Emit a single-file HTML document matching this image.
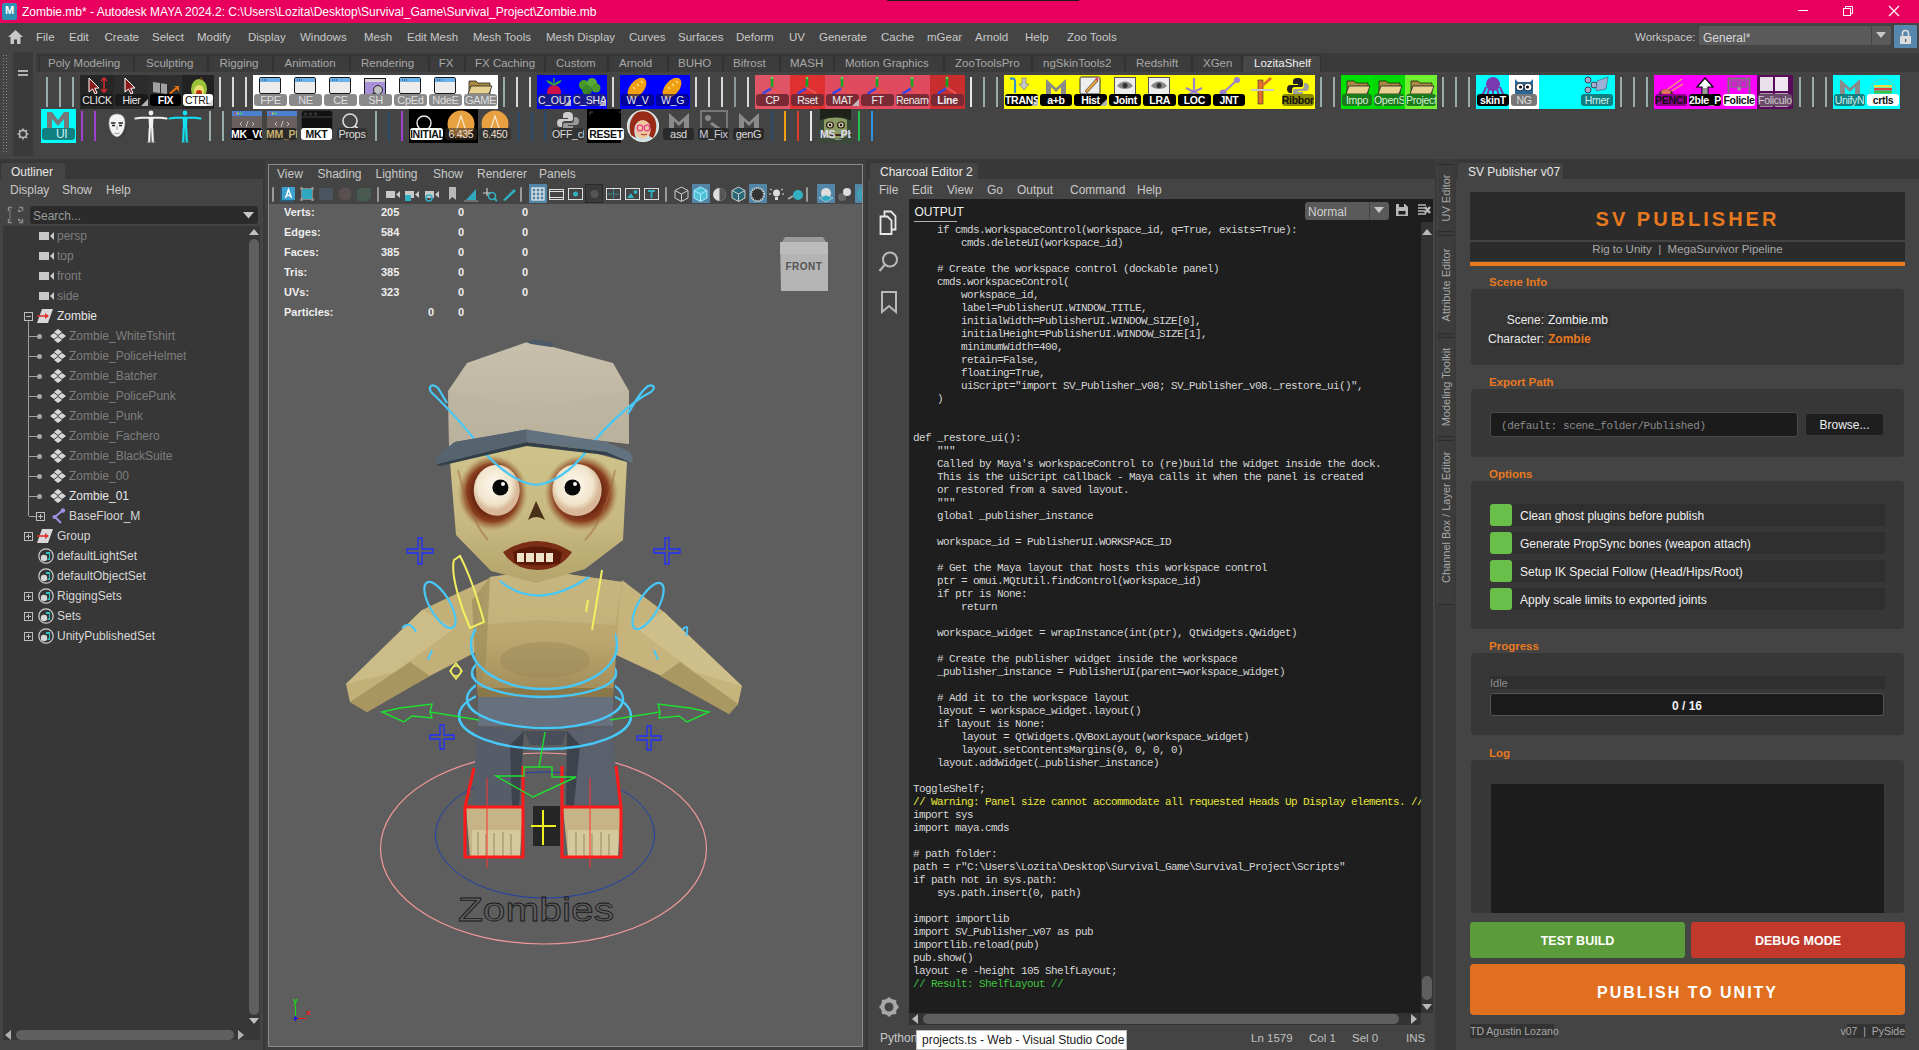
<!DOCTYPE html><html><head><meta charset="utf-8"><style>
html,body{margin:0;padding:0;width:1919px;height:1050px;overflow:hidden;background:#444;}
body{position:relative;font-family:"Liberation Sans",sans-serif;}
div{position:absolute;}
.t{white-space:pre;}
</style></head><body>
<div style="left:0px;top:0px;width:1919px;height:23px;background:#e9005e;"></div>
<div style="left:0px;top:22px;width:1919px;height:1px;background:#f10060;"></div>
<div style="left:887px;top:0px;width:192px;height:1px;background:#1a1a1a;"></div>
<div style="left:2px;top:3px;width:15px;height:17px;background:#2f8fb0;border-radius:2px"></div>
<div class="t" style="left:5px;top:5px;font-size:11px;line-height:11px;color:#fff;font-weight:bold">M</div>
<div class="t" style="left:22px;top:6px;font-size:12px;line-height:12px;color:#ffffff;">Zombie.mb* - Autodesk MAYA 2024.2: C:\Users\Lozita\Desktop\Survival_Game\Survival_Project\Zombie.mb</div>
<div style="left:1798px;top:10px;width:10px;height:1px;background:#fff;"></div>
<svg style="position:absolute;left:1842px;top:5px" width="12" height="12"><rect x="1.5" y="3.5" width="7" height="7" fill="none" stroke="#fff"/><path d="M3.5 3.5V1.5H10.5V8.5H8.5" fill="none" stroke="#fff"/></svg>
<svg style="position:absolute;left:1888px;top:5px" width="12" height="12"><path d="M1 1L11 11M11 1L1 11" stroke="#fff" stroke-width="1.2"/></svg>
<div style="left:0px;top:23px;width:1919px;height:29px;background:#444444;"></div>
<div style="left:0px;top:23px;width:1919px;height:1px;background:#3b4a43;"></div>
<svg style="position:absolute;left:7px;top:29px" width="17" height="16"><path d="M8.5 1L1 8H3.5V15H7V10.5H10V15H13.5V8H16Z" fill="#c8c8c8"/></svg>
<div class="t" style="left:36px;top:32px;font-size:11.5px;line-height:11.5px;color:#c8c8c8;">File</div>
<div class="t" style="left:69px;top:32px;font-size:11.5px;line-height:11.5px;color:#c8c8c8;">Edit</div>
<div class="t" style="left:104.5px;top:32px;font-size:11.5px;line-height:11.5px;color:#c8c8c8;">Create</div>
<div class="t" style="left:152px;top:32px;font-size:11.5px;line-height:11.5px;color:#c8c8c8;">Select</div>
<div class="t" style="left:197px;top:32px;font-size:11.5px;line-height:11.5px;color:#c8c8c8;">Modify</div>
<div class="t" style="left:248px;top:32px;font-size:11.5px;line-height:11.5px;color:#c8c8c8;">Display</div>
<div class="t" style="left:300px;top:32px;font-size:11.5px;line-height:11.5px;color:#c8c8c8;">Windows</div>
<div class="t" style="left:364px;top:32px;font-size:11.5px;line-height:11.5px;color:#c8c8c8;">Mesh</div>
<div class="t" style="left:407px;top:32px;font-size:11.5px;line-height:11.5px;color:#c8c8c8;">Edit Mesh</div>
<div class="t" style="left:473px;top:32px;font-size:11.5px;line-height:11.5px;color:#c8c8c8;">Mesh Tools</div>
<div class="t" style="left:546px;top:32px;font-size:11.5px;line-height:11.5px;color:#c8c8c8;">Mesh Display</div>
<div class="t" style="left:629px;top:32px;font-size:11.5px;line-height:11.5px;color:#c8c8c8;">Curves</div>
<div class="t" style="left:678px;top:32px;font-size:11.5px;line-height:11.5px;color:#c8c8c8;">Surfaces</div>
<div class="t" style="left:736px;top:32px;font-size:11.5px;line-height:11.5px;color:#c8c8c8;">Deform</div>
<div class="t" style="left:789px;top:32px;font-size:11.5px;line-height:11.5px;color:#c8c8c8;">UV</div>
<div class="t" style="left:819px;top:32px;font-size:11.5px;line-height:11.5px;color:#c8c8c8;">Generate</div>
<div class="t" style="left:881px;top:32px;font-size:11.5px;line-height:11.5px;color:#c8c8c8;">Cache</div>
<div class="t" style="left:927px;top:32px;font-size:11.5px;line-height:11.5px;color:#c8c8c8;">mGear</div>
<div class="t" style="left:975px;top:32px;font-size:11.5px;line-height:11.5px;color:#c8c8c8;">Arnold</div>
<div class="t" style="left:1025px;top:32px;font-size:11.5px;line-height:11.5px;color:#c8c8c8;">Help</div>
<div class="t" style="left:1067px;top:32px;font-size:11.5px;line-height:11.5px;color:#c8c8c8;">Zoo Tools</div>
<div class="t" style="left:1635px;top:32px;font-size:11.5px;line-height:11.5px;color:#c8c8c8;">Workspace:</div>
<div style="left:1699px;top:26px;width:192px;height:19px;background:#5a5a5a;border-radius:2px"></div>
<div style="left:1871px;top:26px;width:1px;height:19px;background:#444;"></div>
<div class="t" style="left:1703px;top:32px;font-size:12px;line-height:12px;color:#d8d8d8;">General*</div>
<svg style="position:absolute;left:1876px;top:32px" width="10" height="6"><path d="M0 0H10L5 6Z" fill="#c8c8c8"/></svg>
<div style="left:1894px;top:25px;width:23px;height:23px;background:#5787ad;border-radius:1px"></div>
<svg style="position:absolute;left:1899px;top:29px" width="13" height="16"><rect x="1" y="7" width="11" height="8" rx="1" fill="#ddd"/><path d="M3.5 7V4.5A3 3 0 0 1 9.5 4.5V7" fill="none" stroke="#ddd" stroke-width="1.6"/><rect x="6" y="10" width="1.2" height="3" fill="#555"/></svg>
<div style="left:0px;top:52px;width:1919px;height:107px;background:#444444;"></div>
<div style="left:2px;top:54px;width:5px;height:100px;background-image:radial-gradient(#8a8a8a 0.8px, transparent 0.9px);background-size:3px 3px"></div>
<div style="left:13px;top:52px;width:20px;height:104px;background:#3a3a3a;"></div>
<div style="left:18px;top:70px;width:10px;height:2px;background:#b0b0b0;"></div>
<div style="left:18px;top:74px;width:10px;height:2px;background:#b0b0b0;"></div>
<svg style="position:absolute;left:17px;top:128px" width="12" height="12"><circle cx="6" cy="6" r="3.6" fill="none" stroke="#b8b8b8" stroke-width="1.6"/><path d="M6 0.5V2.5M6 9.5V11.5M0.5 6H2.5M9.5 6H11.5M2.1 2.1L3.5 3.5M8.5 8.5L9.9 9.9M2.1 9.9L3.5 8.5M8.5 3.5L9.9 2.1" stroke="#b8b8b8" stroke-width="1.6"/></svg>
<div style="left:36px;top:53px;width:1883px;height:19px;background:#3a3a3a;"></div>
<div style="left:39px;top:55px;width:93px;height:16px;background:#3c3c3c;border:1px solid #323232;border-bottom:none;border-radius:3px 3px 0 0"></div>
<div class="t" style="left:48px;top:58px;font-size:11.5px;line-height:11.5px;color:#a8a8a8;">Poly Modeling</div>
<div style="left:134px;top:55px;width:72px;height:16px;background:#3c3c3c;border:1px solid #323232;border-bottom:none;border-radius:3px 3px 0 0"></div>
<div class="t" style="left:146px;top:58px;font-size:11.5px;line-height:11.5px;color:#a8a8a8;">Sculpting</div>
<div style="left:208px;top:55px;width:63px;height:16px;background:#3c3c3c;border:1px solid #323232;border-bottom:none;border-radius:3px 3px 0 0"></div>
<div class="t" style="left:219.5px;top:58px;font-size:11.5px;line-height:11.5px;color:#a8a8a8;">Rigging</div>
<div style="left:273px;top:55px;width:74.5px;height:16px;background:#3c3c3c;border:1px solid #323232;border-bottom:none;border-radius:3px 3px 0 0"></div>
<div class="t" style="left:284.5px;top:58px;font-size:11.5px;line-height:11.5px;color:#a8a8a8;">Animation</div>
<div style="left:349.5px;top:55px;width:77.5px;height:16px;background:#3c3c3c;border:1px solid #323232;border-bottom:none;border-radius:3px 3px 0 0"></div>
<div class="t" style="left:361px;top:58px;font-size:11.5px;line-height:11.5px;color:#a8a8a8;">Rendering</div>
<div style="left:429px;top:55px;width:33.5px;height:16px;background:#3c3c3c;border:1px solid #323232;border-bottom:none;border-radius:3px 3px 0 0"></div>
<div class="t" style="left:438.7px;top:58px;font-size:11.5px;line-height:11.5px;color:#a8a8a8;">FX</div>
<div style="left:464.5px;top:55px;width:78.5px;height:16px;background:#3c3c3c;border:1px solid #323232;border-bottom:none;border-radius:3px 3px 0 0"></div>
<div class="t" style="left:475px;top:58px;font-size:11.5px;line-height:11.5px;color:#a8a8a8;">FX Caching</div>
<div style="left:545px;top:55px;width:61px;height:16px;background:#3c3c3c;border:1px solid #323232;border-bottom:none;border-radius:3px 3px 0 0"></div>
<div class="t" style="left:556px;top:58px;font-size:11.5px;line-height:11.5px;color:#a8a8a8;">Custom</div>
<div style="left:608px;top:55px;width:58px;height:16px;background:#3c3c3c;border:1px solid #323232;border-bottom:none;border-radius:3px 3px 0 0"></div>
<div class="t" style="left:619px;top:58px;font-size:11.5px;line-height:11.5px;color:#a8a8a8;">Arnold</div>
<div style="left:668px;top:55px;width:52.5px;height:16px;background:#3c3c3c;border:1px solid #323232;border-bottom:none;border-radius:3px 3px 0 0"></div>
<div class="t" style="left:678px;top:58px;font-size:11.5px;line-height:11.5px;color:#a8a8a8;">BUHO</div>
<div style="left:722.5px;top:55px;width:55.5px;height:16px;background:#3c3c3c;border:1px solid #323232;border-bottom:none;border-radius:3px 3px 0 0"></div>
<div class="t" style="left:733px;top:58px;font-size:11.5px;line-height:11.5px;color:#a8a8a8;">Bifrost</div>
<div style="left:780px;top:55px;width:52px;height:16px;background:#3c3c3c;border:1px solid #323232;border-bottom:none;border-radius:3px 3px 0 0"></div>
<div class="t" style="left:790px;top:58px;font-size:11.5px;line-height:11.5px;color:#a8a8a8;">MASH</div>
<div style="left:834px;top:55px;width:108px;height:16px;background:#3c3c3c;border:1px solid #323232;border-bottom:none;border-radius:3px 3px 0 0"></div>
<div class="t" style="left:845px;top:58px;font-size:11.5px;line-height:11.5px;color:#a8a8a8;">Motion Graphics</div>
<div style="left:944px;top:55px;width:86px;height:16px;background:#3c3c3c;border:1px solid #323232;border-bottom:none;border-radius:3px 3px 0 0"></div>
<div class="t" style="left:955px;top:58px;font-size:11.5px;line-height:11.5px;color:#a8a8a8;">ZooToolsPro</div>
<div style="left:1032px;top:55px;width:91px;height:16px;background:#3c3c3c;border:1px solid #323232;border-bottom:none;border-radius:3px 3px 0 0"></div>
<div class="t" style="left:1043px;top:58px;font-size:11.5px;line-height:11.5px;color:#a8a8a8;">ngSkinTools2</div>
<div style="left:1125px;top:55px;width:65px;height:16px;background:#3c3c3c;border:1px solid #323232;border-bottom:none;border-radius:3px 3px 0 0"></div>
<div class="t" style="left:1136px;top:58px;font-size:11.5px;line-height:11.5px;color:#a8a8a8;">Redshift</div>
<div style="left:1192px;top:55px;width:48px;height:16px;background:#3c3c3c;border:1px solid #323232;border-bottom:none;border-radius:3px 3px 0 0"></div>
<div class="t" style="left:1203px;top:58px;font-size:11.5px;line-height:11.5px;color:#a8a8a8;">XGen</div>
<div style="left:1242px;top:55px;width:77px;height:16px;background:#474747;border:1px solid #323232;border-bottom:none;border-radius:3px 3px 0 0"></div>
<div class="t" style="left:1254px;top:58px;font-size:11.5px;line-height:11.5px;color:#f0f0f0;">LozitaShelf</div>
<div style="left:46px;top:77px;width:2px;height:30px;background:#9aabab"></div>
<div style="left:59px;top:77px;width:2px;height:30px;background:#9aabab"></div>
<div style="left:72px;top:77px;width:2px;height:30px;background:#9aabab"></div>
<div style="left:80px;top:75px;width:134px;height:34px;background:#262626"></div>
<svg style="position:absolute;left:80px;top:75px;" width="34" height="34" viewBox="0 0 34 34"><path d="M9 3L9 17L12.5 14L15 19L17 18L14.8 13.2L19 13Z" fill="#8b1a1a" stroke="#fff" stroke-width="1"/><path d="M24 3V17M21 6L24 3L27 6M21 14L24 17L27 14" stroke="#d02a2a" stroke-width="1.6" fill="none"/></svg>
<div class="t" style="left:81px;top:94px;width:32px;height:12px;background:#1a1a1a;border-radius:3px;color:#e8e8e8;font-size:10.5px;line-height:12px;text-align:center;overflow:hidden;letter-spacing:-0.3px;">CLICK</div>
<div style="left:114px;top:75px;width:35px;height:34px;background:#2c2c2c"></div>
<svg style="position:absolute;left:114px;top:75px;" width="34" height="34" viewBox="0 0 34 34"><path d="M11 3L11 17L14.5 14L17 19L19 18L16.8 13.2L21 13Z" fill="#8b1a1a" stroke="#fff" stroke-width="1"/></svg>
<div class="t" style="left:115px;top:94px;width:33px;height:12px;background:#1a1a1a;border-radius:3px;color:#e8e8e8;font-size:10.5px;line-height:12px;text-align:center;overflow:hidden;letter-spacing:-0.3px;">Hier</div>
<svg style="position:absolute;left:141px;top:99px;" width="7" height="7" viewBox="0 0 7 7"><path d="M7 0V7H0Z" fill="#d0d0d0" fill-opacity="0.85"/></svg>
<div style="left:149px;top:75px;width:33px;height:34px;background:#2f2f2f"></div>
<svg style="position:absolute;left:149px;top:75px;" width="34" height="34" viewBox="0 0 34 34"><path d="M4 7L11 8V18L4 17Z M12 8.2L18 9V19L12 18.2Z" fill="#a0a0a0"/><path d="M20 18L27 12L24 11H30V17L28 14L22 19Z" fill="#e07010"/></svg>
<div class="t" style="left:150px;top:94px;width:31px;height:12px;background:#000;border-radius:3px;color:#fff;font-size:10.5px;line-height:12px;text-align:center;overflow:hidden;letter-spacing:-0.3px;font-weight:bold;">FIX</div>
<div style="left:182px;top:75px;width:32px;height:34px;background:#222"></div>
<svg style="position:absolute;left:182px;top:75px;" width="34" height="34" viewBox="0 0 34 34"><ellipse cx="17" cy="14" rx="8" ry="10" fill="#9ac23a"/><ellipse cx="17" cy="16" rx="5" ry="6" fill="#e8e070"/><circle cx="17" cy="18" r="3" fill="#c03010"/><path d="M19 2L20 5" stroke="#7a4a20" stroke-width="1.2"/></svg>
<div class="t" style="left:183px;top:94px;width:30px;height:12px;background:#fff;border-radius:3px;color:#111;font-size:10.5px;line-height:12px;text-align:center;overflow:hidden;letter-spacing:-0.3px;">CTRL</div>
<svg style="position:absolute;left:206px;top:99px;" width="7" height="7" viewBox="0 0 7 7"><path d="M7 0V7H0Z" fill="#d0d0d0" fill-opacity="0.85"/></svg>
<div style="left:219px;top:77px;width:2px;height:30px;background:#d8d8d8"></div>
<div style="left:232px;top:77px;width:2px;height:30px;background:#d8d8d8"></div>
<div style="left:245px;top:77px;width:2px;height:30px;background:#d8d8d8"></div>
<div style="left:253px;top:75px;width:245px;height:34px;background:#fff"></div>
<svg style="position:absolute;left:253px;top:75px;" width="34" height="34" viewBox="0 0 34 34"><rect x="6.5" y="2.5" width="21" height="16" rx="1.5" fill="#ececec" stroke="#1a1a1a"/><rect x="7" y="3" width="20" height="4" fill="#6ab2ea"/><path d="M9 5h1M11 5h1M13 5h1" stroke="#234" stroke-width="1"/></svg>
<div class="t" style="left:254px;top:94px;width:33px;height:12px;background:#8a8a8a;border-radius:3px;color:#dedede;font-size:11px;line-height:12px;text-align:center;overflow:hidden;letter-spacing:-0.3px;">FPE</div>
<svg style="position:absolute;left:288px;top:75px;" width="34" height="34" viewBox="0 0 34 34"><rect x="6.5" y="2.5" width="21" height="16" rx="1.5" fill="#ececec" stroke="#1a1a1a"/><rect x="7" y="3" width="20" height="4" fill="#6ab2ea"/><path d="M9 5h1M11 5h1M13 5h1" stroke="#234" stroke-width="1"/></svg>
<div class="t" style="left:289px;top:94px;width:33px;height:12px;background:#8a8a8a;border-radius:3px;color:#dedede;font-size:11px;line-height:12px;text-align:center;overflow:hidden;letter-spacing:-0.3px;">NE</div>
<svg style="position:absolute;left:323px;top:75px;" width="34" height="34" viewBox="0 0 34 34"><rect x="6.5" y="2.5" width="21" height="16" rx="1.5" fill="#ececec" stroke="#1a1a1a"/><rect x="7" y="3" width="20" height="4" fill="#6ab2ea"/><path d="M9 5h1M11 5h1M13 5h1" stroke="#234" stroke-width="1"/></svg>
<div class="t" style="left:324px;top:94px;width:33px;height:12px;background:#8a8a8a;border-radius:3px;color:#dedede;font-size:11px;line-height:12px;text-align:center;overflow:hidden;letter-spacing:-0.3px;">CE</div>
<svg style="position:absolute;left:358px;top:75px;" width="34" height="34" viewBox="0 0 34 34"><rect x="6.5" y="3.5" width="21" height="22" fill="#a890d8" stroke="#1a1a1a"/><rect x="7" y="4" width="20" height="3" fill="#d8d8d8"/><circle cx="20" cy="15" r="4.5" fill="#c0c0c0" stroke="#222"/><path d="M16 18L12 23" stroke="#222" stroke-width="2"/></svg>
<div class="t" style="left:359px;top:94px;width:33px;height:12px;background:#8a8a8a;border-radius:3px;color:#dedede;font-size:11px;line-height:12px;text-align:center;overflow:hidden;letter-spacing:-0.3px;">SH</div>
<svg style="position:absolute;left:393px;top:75px;" width="34" height="34" viewBox="0 0 34 34"><rect x="6.5" y="2.5" width="21" height="16" rx="1.5" fill="#ececec" stroke="#1a1a1a"/><rect x="7" y="3" width="20" height="4" fill="#6ab2ea"/><path d="M9 5h1M11 5h1M13 5h1" stroke="#234" stroke-width="1"/></svg>
<div class="t" style="left:394px;top:94px;width:33px;height:12px;background:#8a8a8a;border-radius:3px;color:#dedede;font-size:11px;line-height:12px;text-align:center;overflow:hidden;letter-spacing:-0.3px;">CpEd</div>
<svg style="position:absolute;left:428px;top:75px;" width="34" height="34" viewBox="0 0 34 34"><rect x="6.5" y="2.5" width="21" height="16" rx="1.5" fill="#ececec" stroke="#1a1a1a"/><rect x="7" y="3" width="20" height="4" fill="#6ab2ea"/><path d="M9 5h1M11 5h1M13 5h1" stroke="#234" stroke-width="1"/></svg>
<div class="t" style="left:429px;top:94px;width:33px;height:12px;background:#8a8a8a;border-radius:3px;color:#dedede;font-size:11px;line-height:12px;text-align:center;overflow:hidden;letter-spacing:-0.3px;">NdeE</div>
<svg style="position:absolute;left:463px;top:75px;" width="34" height="34" viewBox="0 0 34 34"><path d="M6 6H13L15 8H27V19H6Z" fill="#a88a40" stroke="#222" stroke-width="0.8"/><path d="M8 11H29L26 19H5Z" fill="#e8d090" stroke="#222" stroke-width="0.8"/></svg>
<div class="t" style="left:464px;top:94px;width:33px;height:12px;background:#8a8a8a;border-radius:3px;color:#dedede;font-size:11px;line-height:12px;text-align:center;overflow:hidden;letter-spacing:-0.3px;">GAME</div>
<div style="left:503px;top:77px;width:2px;height:30px;background:#9aabab"></div>
<div style="left:516px;top:77px;width:2px;height:30px;background:#d8d8d8"></div>
<div style="left:529px;top:77px;width:2px;height:30px;background:#d8d8d8"></div>
<div style="left:537px;top:75px;width:70px;height:34px;background:#0000ff"></div>
<svg style="position:absolute;left:537px;top:75px;" width="34" height="34" viewBox="0 0 34 34"><circle cx="17" cy="17" r="7" fill="#d0104a"/><path d="M17 10C14 5 11 6 9 5C11 9 14 10 17 10C20 10 23 9 25 5C23 6 20 5 17 10Z" fill="#3aa03a"/><path d="M17 11V3" stroke="#3aa03a" stroke-width="1.5"/></svg>
<div class="t" style="left:538px;top:94px;width:33px;height:12px;background:#1a1a8a;border-radius:3px;color:#e8e8e8;font-size:10.5px;line-height:12px;text-align:center;overflow:hidden;letter-spacing:-0.3px;">C_OUT</div>
<svg style="position:absolute;left:564px;top:99px;" width="7" height="7" viewBox="0 0 7 7"><path d="M7 0V7H0Z" fill="#d0d0d0" fill-opacity="0.85"/></svg>
<svg style="position:absolute;left:572px;top:75px;" width="34" height="34" viewBox="0 0 34 34"><circle cx="12" cy="10" r="5" fill="#4a9a2a"/><circle cx="20" cy="8" r="5" fill="#5aaa3a"/><circle cx="24" cy="13" r="4.5" fill="#4a9a2a"/><circle cx="15" cy="15" r="5" fill="#3a8a2a"/><path d="M17 16V22" stroke="#3a7a1a" stroke-width="3"/></svg>
<div class="t" style="left:573px;top:94px;width:33px;height:12px;background:#1a1a8a;border-radius:3px;color:#e8e8e8;font-size:10.5px;line-height:12px;text-align:center;overflow:hidden;letter-spacing:-0.3px;">C_SHAF</div>
<svg style="position:absolute;left:599px;top:99px;" width="7" height="7" viewBox="0 0 7 7"><path d="M7 0V7H0Z" fill="#d0d0d0" fill-opacity="0.85"/></svg>
<div style="left:612px;top:77px;width:2px;height:30px;background:#d8d8d8"></div>
<div style="left:620px;top:75px;width:70px;height:34px;background:#0000ff"></div>
<svg style="position:absolute;left:620px;top:75px;" width="34" height="34" viewBox="0 0 34 34"><ellipse cx="17" cy="13" rx="7" ry="12" transform="rotate(40 17 13)" fill="#f0a010"/><path d="M13 12L15 14M17 9L19 11M21 6L23 8" stroke="#ffe090" stroke-width="1.2"/></svg>
<div class="t" style="left:621px;top:94px;width:33px;height:12px;background:rgba(0,0,90,0.6);border-radius:3px;color:#e8e8e8;font-size:10.5px;line-height:12px;text-align:center;overflow:hidden;letter-spacing:-0.3px;">W_V</div>
<svg style="position:absolute;left:655px;top:75px;" width="34" height="34" viewBox="0 0 34 34"><ellipse cx="17" cy="13" rx="7" ry="12" transform="rotate(40 17 13)" fill="#f0a010"/><path d="M13 12L15 14M17 9L19 11M21 6L23 8" stroke="#ffe090" stroke-width="1.2"/></svg>
<div class="t" style="left:656px;top:94px;width:33px;height:12px;background:rgba(0,0,90,0.6);border-radius:3px;color:#e8e8e8;font-size:10.5px;line-height:12px;text-align:center;overflow:hidden;letter-spacing:-0.3px;">W_G</div>
<div style="left:695px;top:77px;width:2px;height:30px;background:#d8d8d8"></div>
<div style="left:708px;top:77px;width:2px;height:30px;background:#d8d8d8"></div>
<div style="left:721px;top:77px;width:2px;height:30px;background:#d8d8d8"></div>
<div style="left:734px;top:77px;width:2px;height:30px;background:#8a9a9a"></div>
<div style="left:747px;top:77px;width:2px;height:30px;background:#d8d8d8"></div>
<div style="left:755px;top:75px;width:35px;height:34px;background:#e05565"></div>
<svg style="position:absolute;left:755px;top:75px;" width="34" height="34" viewBox="0 0 34 34"><path d="M17 13.5V3" stroke="#10a820" stroke-width="2.6"/><path d="M17 13L8.5 18" stroke="#3048e8" stroke-width="2.6" stroke-linecap="round"/><path d="M17 13L25.5 18" stroke="#e85050" stroke-width="2.6" stroke-linecap="round"/><circle cx="17" cy="3" r="1.3" fill="#50e060"/></svg>
<div class="t" style="left:756px;top:94px;width:33px;height:12px;background:#7a2a35;border-radius:3px;color:#eee;font-size:10.5px;line-height:12px;text-align:center;overflow:hidden;letter-spacing:-0.3px;">CP</div>
<div style="left:790px;top:75px;width:35px;height:34px;background:#e03030"></div>
<svg style="position:absolute;left:790px;top:75px;" width="34" height="34" viewBox="0 0 34 34"><path d="M17 13.5V3" stroke="#10a820" stroke-width="2.6"/><path d="M17 13L8.5 18" stroke="#3048e8" stroke-width="2.6" stroke-linecap="round"/><path d="M17 13L25.5 18" stroke="#e85050" stroke-width="2.6" stroke-linecap="round"/><circle cx="17" cy="3" r="1.3" fill="#50e060"/></svg>
<div class="t" style="left:791px;top:94px;width:33px;height:12px;background:#7a2a35;border-radius:3px;color:#eee;font-size:10.5px;line-height:12px;text-align:center;overflow:hidden;letter-spacing:-0.3px;">Rset</div>
<div style="left:825px;top:75px;width:35px;height:34px;background:#e04a5e"></div>
<svg style="position:absolute;left:825px;top:75px;" width="34" height="34" viewBox="0 0 34 34"><path d="M17 13.5V3" stroke="#10a820" stroke-width="2.6"/><path d="M17 13L8.5 18" stroke="#3048e8" stroke-width="2.6" stroke-linecap="round"/><path d="M17 13L25.5 18" stroke="#e85050" stroke-width="2.6" stroke-linecap="round"/><circle cx="17" cy="3" r="1.3" fill="#50e060"/></svg>
<div class="t" style="left:826px;top:94px;width:33px;height:12px;background:#7a2a35;border-radius:3px;color:#eee;font-size:10.5px;line-height:12px;text-align:center;overflow:hidden;letter-spacing:-0.3px;">MAT</div>
<svg style="position:absolute;left:852px;top:99px;" width="7" height="7" viewBox="0 0 7 7"><path d="M7 0V7H0Z" fill="#d0d0d0" fill-opacity="0.85"/></svg>
<div style="left:860px;top:75px;width:35px;height:34px;background:#e04a5e"></div>
<svg style="position:absolute;left:860px;top:75px;" width="34" height="34" viewBox="0 0 34 34"><path d="M17 13.5V3" stroke="#10a820" stroke-width="2.6"/><path d="M17 13L8.5 18" stroke="#3048e8" stroke-width="2.6" stroke-linecap="round"/><path d="M17 13L25.5 18" stroke="#e85050" stroke-width="2.6" stroke-linecap="round"/><circle cx="17" cy="3" r="1.3" fill="#50e060"/></svg>
<div class="t" style="left:861px;top:94px;width:33px;height:12px;background:#7a2a35;border-radius:3px;color:#eee;font-size:10.5px;line-height:12px;text-align:center;overflow:hidden;letter-spacing:-0.3px;">FT</div>
<div style="left:895px;top:75px;width:35px;height:34px;background:#e04a5e"></div>
<svg style="position:absolute;left:895px;top:75px;" width="34" height="34" viewBox="0 0 34 34"><path d="M17 13.5V3" stroke="#10a820" stroke-width="2.6"/><path d="M17 13L8.5 18" stroke="#3048e8" stroke-width="2.6" stroke-linecap="round"/><path d="M17 13L25.5 18" stroke="#e85050" stroke-width="2.6" stroke-linecap="round"/><circle cx="17" cy="3" r="1.3" fill="#50e060"/></svg>
<div class="t" style="left:896px;top:94px;width:33px;height:12px;background:#7a2a35;border-radius:3px;color:#eee;font-size:10.5px;line-height:12px;text-align:center;overflow:hidden;letter-spacing:-0.3px;">Rename</div>
<div style="left:930px;top:75px;width:35px;height:34px;background:#c82e2e"></div>
<svg style="position:absolute;left:930px;top:75px;" width="34" height="34" viewBox="0 0 34 34"><path d="M17 13.5V3" stroke="#10a820" stroke-width="2.6"/><path d="M17 13L8.5 18" stroke="#3048e8" stroke-width="2.6" stroke-linecap="round"/><path d="M17 13L25.5 18" stroke="#e85050" stroke-width="2.6" stroke-linecap="round"/><circle cx="17" cy="3" r="1.3" fill="#50e060"/></svg>
<div class="t" style="left:931px;top:94px;width:33px;height:12px;background:#7a2a35;border-radius:3px;color:#eee;font-size:10.5px;line-height:12px;text-align:center;overflow:hidden;letter-spacing:-0.3px;font-weight:bold;">Line</div>
<div style="left:970px;top:77px;width:2px;height:30px;background:#e8e8e8"></div>
<div style="left:983px;top:77px;width:2px;height:30px;background:#9aabab"></div>
<div style="left:996px;top:77px;width:2px;height:30px;background:#9aabab"></div>
<div style="left:1004px;top:75px;width:311px;height:34px;background:#ffff00"></div>
<svg style="position:absolute;left:1004.0px;top:75px;" width="34" height="34" viewBox="0 0 34 34"><path d="M6 4C10 2 12 5 11 10V18" stroke="#3090d0" stroke-width="2.2" fill="none"/><path d="M18 3H22V9H25L20 15L15 9H18Z" fill="#c8c8c8" stroke="#666" stroke-width="0.6"/></svg>
<div class="t" style="left:1005.0px;top:94px;width:32.6px;height:12px;background:#000;border-radius:3px;color:#fff;font-size:10.5px;line-height:12px;text-align:center;overflow:hidden;letter-spacing:-0.3px;font-weight:bold;">TRANS</div>
<svg style="position:absolute;left:1030.6px;top:99px;" width="7" height="7" viewBox="0 0 7 7"><path d="M7 0V7H0Z" fill="#d0d0d0" fill-opacity="0.85"/></svg>
<svg style="position:absolute;left:1038.6px;top:75px;" width="34" height="34" viewBox="0 0 34 34"><path d="M7 20V4L17 13L27 4V20H22V12L17 17L12 12V20Z" fill="#8a8a8a"/></svg>
<div class="t" style="left:1039.6px;top:94px;width:32.6px;height:12px;background:#000;border-radius:3px;color:#fff;font-size:10.5px;line-height:12px;text-align:center;overflow:hidden;letter-spacing:-0.3px;font-weight:bold;">a+b</div>
<svg style="position:absolute;left:1073.2px;top:75px;" width="34" height="34" viewBox="0 0 34 34"><rect x="7" y="2" width="20" height="17" rx="1.5" fill="#eee" stroke="#333"/><path d="M12 16L23 4L25 6L14 18Z" fill="#e0a040" stroke="#333" stroke-width="0.6"/><circle cx="24" cy="4" r="1.5" fill="#e04050"/></svg>
<div class="t" style="left:1074.2px;top:94px;width:32.6px;height:12px;background:#000;border-radius:3px;color:#fff;font-size:10.5px;line-height:12px;text-align:center;overflow:hidden;letter-spacing:-0.3px;font-weight:bold;">Hist</div>
<svg style="position:absolute;left:1099.8px;top:99px;" width="7" height="7" viewBox="0 0 7 7"><path d="M7 0V7H0Z" fill="#d0d0d0" fill-opacity="0.85"/></svg>
<svg style="position:absolute;left:1107.8px;top:75px;" width="34" height="34" viewBox="0 0 34 34"><rect x="6.5" y="2.5" width="21" height="17" fill="#eee" stroke="#555"/><path d="M9 11C13 5 21 5 25 11C21 15 13 15 9 11Z" fill="#888"/><circle cx="17" cy="10.5" r="2.5" fill="#333"/></svg>
<div class="t" style="left:1108.8px;top:94px;width:32.6px;height:12px;background:#000;border-radius:3px;color:#fff;font-size:10.5px;line-height:12px;text-align:center;overflow:hidden;letter-spacing:-0.3px;font-weight:bold;">Joint</div>
<svg style="position:absolute;left:1142.4px;top:75px;" width="34" height="34" viewBox="0 0 34 34"><rect x="6.5" y="2.5" width="21" height="17" fill="#eee" stroke="#555"/><path d="M9 11C13 5 21 5 25 11C21 15 13 15 9 11Z" fill="#888"/><circle cx="17" cy="10.5" r="2.5" fill="#333"/></svg>
<div class="t" style="left:1143.4px;top:94px;width:32.6px;height:12px;background:#000;border-radius:3px;color:#fff;font-size:10.5px;line-height:12px;text-align:center;overflow:hidden;letter-spacing:-0.3px;font-weight:bold;">LRA</div>
<svg style="position:absolute;left:1177.0px;top:75px;" width="34" height="34" viewBox="0 0 34 34"><path d="M17 3V17M17 17L9 13M17 17L25 13M17 17L11 20M17 17L23 20" stroke="#9a80d0" stroke-width="2.2"/></svg>
<div class="t" style="left:1178.0px;top:94px;width:32.6px;height:12px;background:#000;border-radius:3px;color:#fff;font-size:10.5px;line-height:12px;text-align:center;overflow:hidden;letter-spacing:-0.3px;font-weight:bold;">LOC</div>
<svg style="position:absolute;left:1211.6px;top:75px;" width="34" height="34" viewBox="0 0 34 34"><circle cx="25" cy="5" r="3" fill="#9a80d0"/><path d="M24 6L12 17" stroke="#9a80d0" stroke-width="2"/><circle cx="11" cy="18" r="3.5" fill="#9a80d0"/></svg>
<div class="t" style="left:1212.6px;top:94px;width:32.6px;height:12px;background:#000;border-radius:3px;color:#fff;font-size:10.5px;line-height:12px;text-align:center;overflow:hidden;letter-spacing:-0.3px;font-weight:bold;">JNT</div>
<svg style="position:absolute;left:1246.2px;top:75px;" width="34" height="34" viewBox="0 0 34 34"><rect x="12" y="5" width="5" height="24" fill="#e07030" stroke="#333" stroke-width="0.6"/><rect x="5" y="14" width="23" height="2" fill="#c8c8c8"/><path d="M16 11L25 3" stroke="#e07030" stroke-width="3"/></svg>
<svg style="position:absolute;left:1280.8px;top:75px;" width="34" height="34" viewBox="0 0 34 34"><path d="M17 3C12 3 12 5 12 7V9H17V10H9C7 10 6 12 6 14C6 17 8 18 9 18H11V15C11 13 12 12 14 12H20C22 12 22 11 22 9V7C22 5 21 3 17 3Z" fill="#222"/><path d="M17 23C22 23 22 21 22 19V17H17V16H25C27 16 28 14 28 12C28 9 26 8 25 8H23V11C23 13 22 14 20 14H14C12 14 12 15 12 17V19C12 21 13 23 17 23Z" fill="#a0a0a0"/></svg>
<div class="t" style="left:1281.8px;top:94px;width:32.6px;height:12px;background:#8a8a00;border-radius:3px;color:#111;font-size:10.5px;line-height:12px;text-align:center;overflow:hidden;letter-spacing:-0.3px;font-weight:bold;">Ribbon</div>
<div style="left:1320px;top:77px;width:2px;height:30px;background:#9aabab"></div>
<div style="left:1333px;top:77px;width:2px;height:30px;background:#9aabab"></div>
<div style="left:1341px;top:75px;width:32px;height:34px;background:#00e000"></div>
<svg style="position:absolute;left:1341px;top:75px;" width="34" height="34" viewBox="0 0 34 34"><path d="M6 6H13L15 8H27V19H6Z" fill="#a88a40" stroke="#222" stroke-width="0.8"/><path d="M8 11H29L26 19H5Z" fill="#e8d090" stroke="#222" stroke-width="0.8"/></svg>
<div class="t" style="left:1342px;top:94px;width:30px;height:12px;background:#1a7a1a;border-radius:3px;color:#d8f0d8;font-size:10.5px;line-height:12px;text-align:center;overflow:hidden;letter-spacing:-0.3px;">Impo</div>
<div style="left:1373px;top:75px;width:32px;height:34px;background:#00d800"></div>
<svg style="position:absolute;left:1373px;top:75px;" width="34" height="34" viewBox="0 0 34 34"><path d="M6 6H13L15 8H27V19H6Z" fill="#a88a40" stroke="#222" stroke-width="0.8"/><path d="M8 11H29L26 19H5Z" fill="#e8d090" stroke="#222" stroke-width="0.8"/></svg>
<div class="t" style="left:1374px;top:94px;width:30px;height:12px;background:#1a7a1a;border-radius:3px;color:#d8f0d8;font-size:10.5px;line-height:12px;text-align:center;overflow:hidden;letter-spacing:-0.3px;">OpenS</div>
<div style="left:1405px;top:75px;width:32px;height:34px;background:#70f030"></div>
<svg style="position:absolute;left:1405px;top:75px;" width="34" height="34" viewBox="0 0 34 34"><path d="M6 6H13L15 8H27V19H6Z" fill="#a88a40" stroke="#222" stroke-width="0.8"/><path d="M8 11H29L26 19H5Z" fill="#e8d090" stroke="#222" stroke-width="0.8"/></svg>
<div class="t" style="left:1406px;top:94px;width:30px;height:12px;background:#1a7a1a;border-radius:3px;color:#d8f0d8;font-size:10.5px;line-height:12px;text-align:center;overflow:hidden;letter-spacing:-0.3px;">Project</div>
<div style="left:1442px;top:77px;width:2px;height:30px;background:#9aabab"></div>
<div style="left:1455px;top:77px;width:2px;height:30px;background:#9aabab"></div>
<div style="left:1468px;top:77px;width:2px;height:30px;background:#9aabab"></div>
<div style="left:1476px;top:75px;width:139px;height:34px;background:#00ffff"></div>
<svg style="position:absolute;left:1476px;top:75px;" width="34" height="34" viewBox="0 0 34 34"><ellipse cx="17" cy="9" rx="7" ry="7" fill="#7a3ab0"/><path d="M10 12C8 18 6 20 5 20M13 14L11 21M17 15V21M21 14L23 21M24 12C26 18 28 20 29 20" stroke="#7a3ab0" stroke-width="2.2" fill="none"/></svg>
<div class="t" style="left:1477px;top:94px;width:32px;height:12px;background:#000;border-radius:3px;color:#fff;font-size:10.5px;line-height:12px;text-align:center;overflow:hidden;letter-spacing:-0.3px;font-weight:bold;">skinT</div>
<svg style="position:absolute;left:1507px;top:75px;" width="34" height="34" viewBox="0 0 34 34"><rect x="2" y="0" width="30" height="34" fill="#fff"/><path d="M8 4L11 7H23L26 4V20C26 24 22 26 17 26C12 26 8 24 8 20Z" fill="#2a6a9a"/><circle cx="13" cy="12" r="4" fill="#fff" stroke="#234"/><circle cx="21" cy="12" r="4" fill="#fff" stroke="#234"/><circle cx="13.5" cy="12" r="1.6" fill="#111"/><circle cx="20.5" cy="12" r="1.6" fill="#111"/></svg>
<div class="t" style="left:1511px;top:94px;width:26px;height:12px;background:#777;border-radius:3px;color:#ddd;font-size:10.5px;line-height:12px;text-align:center;overflow:hidden;letter-spacing:-0.3px;">NG</div>
<svg style="position:absolute;left:1580px;top:75px;" width="34" height="34" viewBox="0 0 34 34"><circle cx="8" cy="5" r="3" fill="#aac" stroke="#345"/><circle cx="8" cy="15" r="3" fill="#aac" stroke="#345"/><circle cx="14" cy="10" r="3" fill="#aac" stroke="#345"/><path d="M17 6L28 2L26 14L16 16Z" fill="#9ab0d8" stroke="#456" stroke-width="0.6"/></svg>
<div class="t" style="left:1581px;top:94px;width:32px;height:12px;background:#108080;border-radius:3px;color:#d0f0f0;font-size:10.5px;line-height:12px;text-align:center;overflow:hidden;letter-spacing:-0.3px;">Hmer</div>
<div style="left:1620px;top:77px;width:2px;height:30px;background:#9aabab"></div>
<div style="left:1633px;top:77px;width:2px;height:30px;background:#9aabab"></div>
<div style="left:1646px;top:77px;width:2px;height:30px;background:#9aabab"></div>
<div style="left:1654px;top:75px;width:139px;height:34px;background:#ff00ff"></div>
<svg style="position:absolute;left:1654px;top:75px;" width="34" height="34" viewBox="0 0 34 34"><path d="M14 14L28 4M16 17L29 9" stroke="#f0a070" stroke-width="1.3"/><ellipse cx="12" cy="19" rx="7" ry="5" fill="#3a2a2a"/><ellipse cx="12" cy="17" rx="5" ry="3" fill="#e07060"/></svg>
<div class="t" style="left:1655px;top:94px;width:32px;height:12px;background:#8a008a;border-radius:3px;color:#111;font-size:10.5px;line-height:12px;text-align:center;overflow:hidden;letter-spacing:-0.3px;font-weight:bold;">PENCIL</div>
<svg style="position:absolute;left:1688px;top:75px;" width="34" height="34" viewBox="0 0 34 34"><path d="M17 3L25 12H20V20H14V12H9Z" fill="#fff" stroke="#000" stroke-width="1.2"/><path d="M16 13V20M18 13V20" stroke="#000" stroke-width="0.8"/></svg>
<div class="t" style="left:1689px;top:94px;width:32px;height:12px;background:#000;border-radius:3px;color:#fff;font-size:10.5px;line-height:12px;text-align:center;overflow:hidden;letter-spacing:-0.3px;font-weight:bold;">2ble_P</div>
<svg style="position:absolute;left:1722px;top:75px;" width="34" height="34" viewBox="0 0 34 34"><rect x="6.5" y="3.5" width="21" height="18" fill="none" stroke="#777" stroke-width="2"/><rect x="9" y="6" width="7" height="6" fill="#d020d0" stroke="#777"/><rect x="18" y="6" width="7" height="6" fill="#d020d0" stroke="#777"/><circle cx="17" cy="14" r="2" fill="#999"/></svg>
<div class="t" style="left:1723px;top:94px;width:32px;height:12px;background:#fff;border-radius:3px;color:#111;font-size:10.5px;line-height:12px;text-align:center;overflow:hidden;letter-spacing:-0.3px;font-weight:bold;">Folicle</div>
<div style="left:1757px;top:75px;width:36px;height:34px;background:#5a0a5a"></div>
<svg style="position:absolute;left:1757px;top:75px;" width="34" height="34" viewBox="0 0 34 34"><rect x="3" y="2" width="13" height="14" fill="#e8e0e8"/><rect x="18" y="2" width="13" height="14" fill="#f0e8f0"/><rect x="3" y="18" width="13" height="14" fill="#a090a0"/><rect x="18" y="18" width="13" height="14" fill="#b0a0b0"/></svg>
<div class="t" style="left:1758px;top:94px;width:34px;height:12px;background:#6a4a6a;border-radius:3px;color:#ccc;font-size:10.5px;line-height:12px;text-align:center;overflow:hidden;letter-spacing:-0.3px;">Foliculo</div>
<div style="left:1799px;top:77px;width:2px;height:30px;background:#9aabab"></div>
<div style="left:1812px;top:77px;width:2px;height:30px;background:#9aabab"></div>
<div style="left:1825px;top:77px;width:2px;height:30px;background:#9aabab"></div>
<div style="left:1833px;top:75px;width:67px;height:34px;background:#00ffff"></div>
<svg style="position:absolute;left:1833px;top:75px;" width="34" height="34" viewBox="0 0 34 34"><path d="M7 20V4L17 13L27 4V20H22V12L17 17L12 12V20Z" fill="#8a8a8a"/></svg>
<div class="t" style="left:1834px;top:94px;width:31px;height:12px;background:#108080;border-radius:3px;color:#d0f0f0;font-size:10.5px;line-height:12px;text-align:center;overflow:hidden;letter-spacing:-0.3px;">UnifyN</div>
<svg style="position:absolute;left:1866px;top:75px;" width="34" height="34" viewBox="0 0 34 34"><circle cx="17" cy="17" r="13" fill="none" stroke="#40e0d0" stroke-width="1.6"/><rect x="8" y="10" width="18" height="2.5" fill="#f0e040"/><rect x="8" y="13" width="18" height="2.5" fill="#e04040"/><rect x="8" y="16" width="18" height="2.5" fill="#40c040"/></svg>
<div class="t" style="left:1867px;top:94px;width:32px;height:12px;background:#fff;border-radius:3px;color:#111;font-size:10.5px;line-height:12px;text-align:center;overflow:hidden;letter-spacing:-0.3px;font-weight:bold;">crtls</div>
<div style="left:41px;top:109px;width:35px;height:34px;background:#00ffff"></div>
<svg style="position:absolute;left:41px;top:109px;" width="34" height="34" viewBox="0 0 34 34"><path d="M6 19V3H11L17 11L23 3H28V19H23V10L17 17L11 10V19Z" fill="#777"/></svg>
<div class="t" style="left:42px;top:128px;width:33px;height:12px;background:#108080;border-radius:3px;color:#d0f0f0;font-size:12px;line-height:12px;text-align:center;overflow:hidden;letter-spacing:-0.3px;">_UI</div>
<div style="left:81px;top:111px;width:2px;height:30px;background:#a040d0"></div>
<div style="left:94px;top:111px;width:2px;height:30px;background:#a040d0"></div>
<svg style="position:absolute;left:100px;top:109px;" width="34" height="34" viewBox="0 0 34 34"><ellipse cx="18.5" cy="17.5" rx="8" ry="11" fill="#222" opacity="0.35"/><path d="M17 5C11 5 9 9 9 14C9 20 12 27 17 28C22 27 25 20 25 14C25 9 23 5 17 5Z" fill="#f2f2f2" stroke="#9a9a9a" stroke-width="0.6"/><path d="M11 14H15.5M18.5 14H23" stroke="#555" stroke-width="1.8"/><path d="M12 16.5h3M19 16.5h3" stroke="#222" stroke-width="1.4"/><path d="M17 17V21M14.5 24Q17 25.5 19.5 24" stroke="#999" stroke-width="1" fill="none"/></svg>
<svg style="position:absolute;left:134px;top:109px;" width="34" height="34" viewBox="0 0 34 34"><circle cx="17" cy="4" r="2.4" fill="#f0f0f0"/><path d="M1.5 9.5L7 8.8H27L32.5 9.5" stroke="#f0f0f0" stroke-width="2" fill="none" stroke-linecap="round"/><path d="M14.5 8H19.5L19 19H15Z" fill="#f0f0f0"/><path d="M15.8 19L15.2 32.5M18.2 19L18.8 32.5" stroke="#f0f0f0" stroke-width="2.2"/><path d="M13.5 33H16.5M17.5 33H20.5" stroke="#f0f0f0" stroke-width="1.2"/></svg>
<svg style="position:absolute;left:168px;top:109px;" width="34" height="34" viewBox="0 0 34 34"><circle cx="17" cy="4" r="2.4" fill="#10e0f0"/><path d="M1.5 9.5L7 8.8H27L32.5 9.5" stroke="#10e0f0" stroke-width="2" fill="none" stroke-linecap="round"/><path d="M14.5 8H19.5L19 19H15Z" fill="#10e0f0"/><path d="M15.8 19L15.2 32.5M18.2 19L18.8 32.5" stroke="#10e0f0" stroke-width="2.2"/><path d="M13.5 33H16.5M17.5 33H20.5" stroke="#10e0f0" stroke-width="1.2"/></svg>
<div style="left:209px;top:111px;width:2px;height:30px;background:#9aabab"></div>
<div style="left:222px;top:111px;width:2px;height:30px;background:#9aabab"></div>
<svg style="position:absolute;left:230px;top:109px;" width="34" height="34" viewBox="0 0 34 34"><rect x="2" y="2" width="30" height="20" rx="1.5" fill="#6a6060"/><rect x="2" y="2" width="30" height="5" fill="#4a80d0"/><circle cx="5" cy="4.5" r="0.9" fill="#e04040"/><circle cx="8" cy="4.5" r="0.9" fill="#e0e040"/><circle cx="11" cy="4.5" r="0.9" fill="#40e040"/><path d="M12 13L10 15L12 17M22 13L24 15L22 17M18 12L16 18" stroke="#ccc" stroke-width="0.9" fill="none"/></svg>
<div class="t" style="left:231px;top:128px;width:31px;height:12px;background:#000;border-radius:3px;color:#fff;font-size:10.5px;line-height:12px;text-align:center;overflow:hidden;letter-spacing:-0.3px;font-weight:bold;">MK_V0</div>
<svg style="position:absolute;left:265px;top:109px;" width="34" height="34" viewBox="0 0 34 34"><rect x="2" y="2" width="30" height="20" rx="1.5" fill="#6a6060"/><rect x="2" y="2" width="30" height="5" fill="#4a80d0"/><circle cx="5" cy="4.5" r="0.9" fill="#e04040"/><circle cx="8" cy="4.5" r="0.9" fill="#e0e040"/><circle cx="11" cy="4.5" r="0.9" fill="#40e040"/><path d="M12 13L10 15L12 17M22 13L24 15L22 17M18 12L16 18" stroke="#ccc" stroke-width="0.9" fill="none"/></svg>
<div class="t" style="left:266px;top:128px;width:31px;height:12px;background:#2a2a2a;border-radius:3px;color:#c8b070;font-size:10.5px;line-height:12px;text-align:center;overflow:hidden;letter-spacing:-0.3px;font-weight:bold;">MM_PE</div>
<svg style="position:absolute;left:300px;top:109px;" width="34" height="34" viewBox="0 0 34 34"><rect x="1.5" y="1.5" width="31" height="22" rx="3" fill="#111" stroke="#333"/><circle cx="5.5" cy="5" r="1.8" fill="#333"/><circle cx="10.5" cy="5" r="1.8" fill="#333"/><circle cx="15.5" cy="5" r="1.8" fill="#333"/><path d="M2 8H32" stroke="#444"/></svg>
<div class="t" style="left:301px;top:128px;width:31px;height:12px;background:#fff;border-radius:3px;color:#111;font-size:10.5px;line-height:12px;text-align:center;overflow:hidden;letter-spacing:-0.3px;font-weight:bold;">MKT</div>
<svg style="position:absolute;left:336px;top:109px;" width="34" height="34" viewBox="0 0 34 34"><circle cx="14" cy="12" r="7" fill="none" stroke="#ddd" stroke-width="1.6"/><path d="M19 17L25 23" stroke="#ddd" stroke-width="2"/></svg>
<div class="t" style="left:337px;top:128px;width:30px;height:12px;background:#333;border-radius:3px;color:#ddd;font-size:11px;line-height:12px;text-align:center;overflow:hidden;letter-spacing:-0.3px;">Props</div>
<div style="left:375px;top:111px;width:2px;height:30px;background:#9aabab"></div>
<div style="left:388px;top:111px;width:2px;height:30px;background:#2a4a6a"></div>
<div style="left:401px;top:111px;width:2px;height:30px;background:#a040d0"></div>
<div style="left:409px;top:109px;width:69px;height:34px;background:#000"></div>
<svg style="position:absolute;left:409px;top:109px;" width="34" height="34" viewBox="0 0 34 34"><circle cx="15" cy="14" r="7" fill="none" stroke="#eee" stroke-width="1.4"/></svg>
<div class="t" style="left:410px;top:128px;width:33px;height:12px;background:#fff;border-radius:3px;color:#111;font-size:10.5px;line-height:12px;text-align:center;overflow:hidden;letter-spacing:-0.3px;font-weight:bold;">INITIAL</div>
<svg style="position:absolute;left:444px;top:109px;" width="34" height="34" viewBox="0 0 34 34"><circle cx="17" cy="15" r="13.5" fill="#e8a040"/><path d="M12 22L17 7L22 22" stroke="#f8e8d0" stroke-width="1.2" fill="none"/></svg>
<div class="t" style="left:445px;top:128px;width:32px;height:12px;background:rgba(60,50,40,0.55);border-radius:3px;color:#f0e0d0;font-size:10.5px;line-height:12px;text-align:center;overflow:hidden;letter-spacing:-0.3px;">6.435</div>
<svg style="position:absolute;left:478px;top:109px;" width="34" height="34" viewBox="0 0 34 34"><circle cx="17" cy="15" r="13.5" fill="#e8a040"/><path d="M12 22L17 7L22 22" stroke="#f8e8d0" stroke-width="1.2" fill="none"/></svg>
<div class="t" style="left:479px;top:128px;width:32px;height:12px;background:#333;border-radius:3px;color:#f0e0d0;font-size:10.5px;line-height:12px;text-align:center;overflow:hidden;letter-spacing:-0.3px;">6.450</div>
<div style="left:518px;top:111px;width:2px;height:30px;background:#2a4a6a"></div>
<div style="left:531px;top:111px;width:2px;height:30px;background:#2a4a6a"></div>
<div style="left:544px;top:111px;width:2px;height:30px;background:#2a4a6a"></div>
<svg style="position:absolute;left:551px;top:109px;" width="34" height="34" viewBox="0 0 34 34"><path d="M17 3C12 3 12 5 12 7V9H17V10H9C7 10 6 12 6 14C6 17 8 18 9 18H11V15C11 13 12 12 14 12H20C22 12 22 11 22 9V7C22 5 21 3 17 3Z" fill="#ccc"/><path d="M17 23C22 23 22 21 22 19V17H17V16H25C27 16 28 14 28 12C28 9 26 8 25 8H23V11C23 13 22 14 20 14H14C12 14 12 15 12 17V19C12 21 13 23 17 23Z" fill="#999"/></svg>
<div class="t" style="left:552px;top:128px;width:32px;height:12px;background:#333;border-radius:3px;color:#ddd;font-size:10.5px;line-height:12px;text-align:center;overflow:hidden;letter-spacing:-0.3px;">OFF_cR</div>
<svg style="position:absolute;left:587px;top:109px;" width="34" height="34" viewBox="0 0 34 34"><rect x="0" y="0" width="38" height="34" fill="#000"/><path d="M3 6V3H6M32 3H35V6" stroke="#666" stroke-width="0.8" fill="none"/></svg>
<div class="t" style="left:588px;top:128px;width:36px;height:12px;background:#fff;border-radius:3px;color:#111;font-size:10.5px;line-height:12px;text-align:center;overflow:hidden;letter-spacing:-0.3px;font-weight:bold;">RESET</div>
<svg style="position:absolute;left:627px;top:109px;" width="34" height="34" viewBox="0 0 34 34"><circle cx="16" cy="17" r="16" fill="#c8e0e8"/><circle cx="16" cy="17" r="15.5" fill="none" stroke="#e8e8e0" stroke-width="1"/><path d="M4 26C1 18 3 7 11 3C19 0 28 5 29 14C30 20 28 26 26 29L22 27C24 22 24 16 20 13C15 10 10 12 8 17C7 21 7 25 9 29Z" fill="#9a2a18"/><path d="M9 17C10 12 14 10 19 12C23 14 24 19 23 24C21 29 16 31 12 29C9 27 8 22 9 17Z" fill="#f0c8a0"/><circle cx="13" cy="19" r="2.8" fill="none" stroke="#e83a8a" stroke-width="1.2"/><circle cx="20" cy="19" r="2.8" fill="none" stroke="#e83a8a" stroke-width="1.2"/><path d="M14 25Q17 27 20 25" stroke="#a03030" fill="none" stroke-width="1"/></svg>
<svg style="position:absolute;left:662px;top:109px;" width="34" height="34" viewBox="0 0 34 34"><path d="M7 20V4L17 13L27 4V20H22V12L17 17L12 12V20Z" fill="#8a8a8a"/></svg>
<div class="t" style="left:663px;top:128px;width:31px;height:12px;background:#2a2a2a;border-radius:3px;color:#ddd;font-size:11px;line-height:12px;text-align:center;overflow:hidden;letter-spacing:-0.3px;">asd</div>
<svg style="position:absolute;left:697px;top:109px;" width="34" height="34" viewBox="0 0 34 34"><rect x="4" y="2" width="26" height="21" fill="none" stroke="#777" stroke-width="2"/><circle cx="11" cy="9" r="3" fill="#888"/><path d="M14 14L25 22" stroke="#888" stroke-width="3"/></svg>
<div class="t" style="left:698px;top:128px;width:31px;height:12px;background:#2a2a2a;border-radius:3px;color:#ccd;font-size:11px;line-height:12px;text-align:center;overflow:hidden;letter-spacing:-0.3px;">M_Fix</div>
<svg style="position:absolute;left:732px;top:109px;" width="34" height="34" viewBox="0 0 34 34"><path d="M7 20V4L17 13L27 4V20H22V12L17 17L12 12V20Z" fill="#8a8a8a"/></svg>
<div class="t" style="left:733px;top:128px;width:31px;height:12px;background:#2a2a2a;border-radius:3px;color:#ddd;font-size:11px;line-height:12px;text-align:center;overflow:hidden;letter-spacing:-0.3px;">genG</div>
<div style="left:771px;top:111px;width:2px;height:30px;background:#2a4a6a"></div>
<div style="left:784px;top:111px;width:2px;height:30px;background:#f0a010"></div>
<div style="left:797px;top:111px;width:2px;height:30px;background:#e03a2a"></div>
<div style="left:810px;top:111px;width:2px;height:30px;background:#e8e8e8"></div>
<svg style="position:absolute;left:819px;top:109px;" width="34" height="34" viewBox="0 0 34 34"><rect x="0" y="0" width="33" height="34" fill="#3a4a38"/><path d="M1 0H32V12C26 7 8 7 1 12Z" fill="#1e2218"/><path d="M5 11C8 8 25 8 28 11V26C25 31 8 31 5 26Z" fill="#8a9a62"/><ellipse cx="11" cy="16" rx="4" ry="3.6" fill="#2a2418"/><ellipse cx="22" cy="16" rx="4" ry="3.6" fill="#2a2418"/><ellipse cx="11" cy="16" rx="2.6" ry="2.4" fill="#d8d0b0"/><ellipse cx="22" cy="16" rx="2.6" ry="2.4" fill="#d8d0b0"/><circle cx="11" cy="16" r="1.2" fill="#111"/><circle cx="22" cy="16" r="1.2" fill="#111"/><path d="M11 26H22" stroke="#3a2a20" stroke-width="2"/></svg>
<div class="t" style="left:820px;top:128px;width:31px;height:12px;border-radius:3px;color:#dde;font-size:10.5px;line-height:12px;text-align:center;overflow:hidden;letter-spacing:-0.3px;font-weight:bold;">MS_Pbs</div>
<div style="left:858px;top:111px;width:2px;height:30px;background:#20c050"></div>
<div style="left:871px;top:111px;width:2px;height:30px;background:#3090e0"></div>
<div style="left:0px;top:159px;width:1919px;height:891px;background:#383838;"></div>
<div style="left:1px;top:163px;width:64px;height:16px;background:#444444;border-radius:3px 3px 0 0"></div>
<div class="t" style="left:11px;top:166px;font-size:12px;line-height:12px;color:#e8e8e8;">Outliner</div>
<div style="left:0px;top:179px;width:263px;height:871px;background:#444444;"></div>
<div class="t" style="left:10px;top:184px;font-size:12px;line-height:12px;color:#c8c8c8;">Display</div>
<div class="t" style="left:62px;top:184px;font-size:12px;line-height:12px;color:#c8c8c8;">Show</div>
<div class="t" style="left:106px;top:184px;font-size:12px;line-height:12px;color:#c8c8c8;">Help</div>
<div style="left:30px;top:206px;width:228px;height:18px;background:#2b2b2b;border-radius:3px"></div>
<svg style="position:absolute;left:7px;top:206px" width="17" height="18"><path d="M1.5 5V1.5H5M12 1.5H15.5V5M15.5 13V16.5H12M5 16.5H1.5V13" fill="none" stroke="#8a8a8a" stroke-width="1.4"/><path d="M3 3.5V14.5" stroke="#7a7a7a" stroke-width="1.2"/><path d="M11 3L15 6L11 6Z M11 12L15 15L11 15Z" fill="#8a8a8a"/></svg>
<div class="t" style="left:33px;top:210px;font-size:12px;line-height:12px;color:#9a9a9a;">Search...</div>
<svg style="position:absolute;left:243px;top:212px" width="11" height="7"><path d="M0 0H11L5.5 6.5Z" fill="#c8c8c8"/></svg>
<div style="left:3px;top:226px;width:257px;height:814px;background:#373737;"></div>
<div style="left:265px;top:160px;width:601px;height:890px;background:#3f3f3f;"></div>
<div style="left:268px;top:164px;width:595px;height:883px;background:#5e5e5e;border:1px solid #8a8a8a;box-sizing:border-box"></div>
<div style="left:269px;top:165px;width:593px;height:39px;background:#444444;"></div>
<div style="left:870px;top:163px;width:108px;height:16px;background:#444444;border-radius:3px 3px 0 0"></div>
<div class="t" style="left:880px;top:166px;font-size:12px;line-height:12px;color:#e8e8e8;">Charcoal Editor 2</div>
<div style="left:868px;top:179px;width:567px;height:871px;background:#444444;"></div>
<div style="left:909px;top:199px;width:524px;height:814px;background:#1e1e1e;"></div>
<div style="left:1435px;top:159px;width:21px;height:891px;background:#3a3a3a;"></div>
<div style="left:1458px;top:163px;width:105px;height:16px;background:#444444;border-radius:3px 3px 0 0"></div>
<div class="t" style="left:1468px;top:166px;font-size:12px;line-height:12px;color:#e8e8e8;">SV Publisher v07</div>
<div style="left:1456px;top:179px;width:463px;height:871px;background:#444444;"></div>
<div style="left:3px;top:226px;width:257px;height:814px;background:#373737;"></div>
<svg style="position:absolute;left:39px;top:230px;" width="16" height="12" viewBox="0 0 16 12"><path d="M0 2H10V10H0Z" fill="#c8c8c8"/><path d="M11 6L15 2V10Z" fill="#c8c8c8"/></svg>
<div class="t" style="left:57px;top:230px;font-size:12px;line-height:12px;color:#7e7e7e;">persp</div>
<svg style="position:absolute;left:39px;top:250px;" width="16" height="12" viewBox="0 0 16 12"><path d="M0 2H10V10H0Z" fill="#c8c8c8"/><path d="M11 6L15 2V10Z" fill="#c8c8c8"/></svg>
<div class="t" style="left:57px;top:250px;font-size:12px;line-height:12px;color:#7e7e7e;">top</div>
<svg style="position:absolute;left:39px;top:270px;" width="16" height="12" viewBox="0 0 16 12"><path d="M0 2H10V10H0Z" fill="#c8c8c8"/><path d="M11 6L15 2V10Z" fill="#c8c8c8"/></svg>
<div class="t" style="left:57px;top:270px;font-size:12px;line-height:12px;color:#7e7e7e;">front</div>
<svg style="position:absolute;left:39px;top:290px;" width="16" height="12" viewBox="0 0 16 12"><path d="M0 2H10V10H0Z" fill="#c8c8c8"/><path d="M11 6L15 2V10Z" fill="#c8c8c8"/></svg>
<div class="t" style="left:57px;top:290px;font-size:12px;line-height:12px;color:#7e7e7e;">side</div>
<svg style="position:absolute;left:24px;top:312px;" width="9" height="9" viewBox="0 0 9 9"><rect x="0.5" y="0.5" width="8" height="8" fill="none" stroke="#bdbdbd"/><path d="M2 4.5H7" stroke="#bdbdbd"/></svg>
<svg style="position:absolute;left:37px;top:308px;" width="17" height="16" viewBox="0 0 17 16"><path d="M5 1H16L11 15H0Z" fill="#d8d8d8"/><path d="M0 8H10" stroke="#e03030" stroke-width="1.6"/><path d="M8 5L12 8L8 11Z" fill="#e03030"/></svg>
<div class="t" style="left:57px;top:310px;font-size:12px;line-height:12px;color:#e8e8e8;">Zombie</div>
<div style="left:28px;top:321px;width:1px;height:195px;background:#a0a0a0;"></div>
<div style="left:29px;top:336px;width:10px;height:1px;background:#a0a0a0;"></div>
<div style="left:37px;top:334px;width:5px;height:5px;background:#a8a8a8;border-radius:50%"></div>
<svg style="position:absolute;left:50px;top:329px;" width="16" height="14" viewBox="0 0 16 14"><path d="M8 0L12 3L8 6L4 3Z M4 4L8 7L4 10L0 7Z M12 4L16 7L12 10L8 7Z M8 8L12 11L8 14L4 11Z" fill="#d8d8d8"/></svg>
<div class="t" style="left:69px;top:330px;font-size:12px;line-height:12px;color:#7e7e7e;">Zombie_WhiteTshirt</div>
<div style="left:29px;top:356px;width:10px;height:1px;background:#a0a0a0;"></div>
<div style="left:37px;top:354px;width:5px;height:5px;background:#a8a8a8;border-radius:50%"></div>
<svg style="position:absolute;left:50px;top:349px;" width="16" height="14" viewBox="0 0 16 14"><path d="M8 0L12 3L8 6L4 3Z M4 4L8 7L4 10L0 7Z M12 4L16 7L12 10L8 7Z M8 8L12 11L8 14L4 11Z" fill="#d8d8d8"/></svg>
<div class="t" style="left:69px;top:350px;font-size:12px;line-height:12px;color:#7e7e7e;">Zombie_PoliceHelmet</div>
<div style="left:29px;top:376px;width:10px;height:1px;background:#a0a0a0;"></div>
<div style="left:37px;top:374px;width:5px;height:5px;background:#a8a8a8;border-radius:50%"></div>
<svg style="position:absolute;left:50px;top:369px;" width="16" height="14" viewBox="0 0 16 14"><path d="M8 0L12 3L8 6L4 3Z M4 4L8 7L4 10L0 7Z M12 4L16 7L12 10L8 7Z M8 8L12 11L8 14L4 11Z" fill="#d8d8d8"/></svg>
<div class="t" style="left:69px;top:370px;font-size:12px;line-height:12px;color:#7e7e7e;">Zombie_Batcher</div>
<div style="left:29px;top:396px;width:10px;height:1px;background:#a0a0a0;"></div>
<div style="left:37px;top:394px;width:5px;height:5px;background:#a8a8a8;border-radius:50%"></div>
<svg style="position:absolute;left:50px;top:389px;" width="16" height="14" viewBox="0 0 16 14"><path d="M8 0L12 3L8 6L4 3Z M4 4L8 7L4 10L0 7Z M12 4L16 7L12 10L8 7Z M8 8L12 11L8 14L4 11Z" fill="#d8d8d8"/></svg>
<div class="t" style="left:69px;top:390px;font-size:12px;line-height:12px;color:#7e7e7e;">Zombie_PolicePunk</div>
<div style="left:29px;top:416px;width:10px;height:1px;background:#a0a0a0;"></div>
<div style="left:37px;top:414px;width:5px;height:5px;background:#a8a8a8;border-radius:50%"></div>
<svg style="position:absolute;left:50px;top:409px;" width="16" height="14" viewBox="0 0 16 14"><path d="M8 0L12 3L8 6L4 3Z M4 4L8 7L4 10L0 7Z M12 4L16 7L12 10L8 7Z M8 8L12 11L8 14L4 11Z" fill="#d8d8d8"/></svg>
<div class="t" style="left:69px;top:410px;font-size:12px;line-height:12px;color:#7e7e7e;">Zombie_Punk</div>
<div style="left:29px;top:436px;width:10px;height:1px;background:#a0a0a0;"></div>
<div style="left:37px;top:434px;width:5px;height:5px;background:#a8a8a8;border-radius:50%"></div>
<svg style="position:absolute;left:50px;top:429px;" width="16" height="14" viewBox="0 0 16 14"><path d="M8 0L12 3L8 6L4 3Z M4 4L8 7L4 10L0 7Z M12 4L16 7L12 10L8 7Z M8 8L12 11L8 14L4 11Z" fill="#d8d8d8"/></svg>
<div class="t" style="left:69px;top:430px;font-size:12px;line-height:12px;color:#7e7e7e;">Zombie_Fachero</div>
<div style="left:29px;top:456px;width:10px;height:1px;background:#a0a0a0;"></div>
<div style="left:37px;top:454px;width:5px;height:5px;background:#a8a8a8;border-radius:50%"></div>
<svg style="position:absolute;left:50px;top:449px;" width="16" height="14" viewBox="0 0 16 14"><path d="M8 0L12 3L8 6L4 3Z M4 4L8 7L4 10L0 7Z M12 4L16 7L12 10L8 7Z M8 8L12 11L8 14L4 11Z" fill="#d8d8d8"/></svg>
<div class="t" style="left:69px;top:450px;font-size:12px;line-height:12px;color:#7e7e7e;">Zombie_BlackSuite</div>
<div style="left:29px;top:476px;width:10px;height:1px;background:#a0a0a0;"></div>
<div style="left:37px;top:474px;width:5px;height:5px;background:#a8a8a8;border-radius:50%"></div>
<svg style="position:absolute;left:50px;top:469px;" width="16" height="14" viewBox="0 0 16 14"><path d="M8 0L12 3L8 6L4 3Z M4 4L8 7L4 10L0 7Z M12 4L16 7L12 10L8 7Z M8 8L12 11L8 14L4 11Z" fill="#d8d8d8"/></svg>
<div class="t" style="left:69px;top:470px;font-size:12px;line-height:12px;color:#7e7e7e;">Zombie_00</div>
<div style="left:29px;top:496px;width:10px;height:1px;background:#a0a0a0;"></div>
<div style="left:37px;top:494px;width:5px;height:5px;background:#a8a8a8;border-radius:50%"></div>
<svg style="position:absolute;left:50px;top:489px;" width="16" height="14" viewBox="0 0 16 14"><path d="M8 0L12 3L8 6L4 3Z M4 4L8 7L4 10L0 7Z M12 4L16 7L12 10L8 7Z M8 8L12 11L8 14L4 11Z" fill="#d8d8d8"/></svg>
<div class="t" style="left:69px;top:490px;font-size:12px;line-height:12px;color:#e8e8e8;">Zombie_01</div>
<div style="left:29px;top:516px;width:7px;height:1px;background:#a0a0a0;"></div>
<svg style="position:absolute;left:36px;top:512px;" width="9" height="9" viewBox="0 0 9 9"><rect x="0.5" y="0.5" width="8" height="8" fill="none" stroke="#bdbdbd"/><path d="M2 4.5H7" stroke="#bdbdbd"/><path d="M4.5 2V7" stroke="#bdbdbd"/></svg>
<svg style="position:absolute;left:51px;top:508px;" width="16" height="17" viewBox="0 0 16 17"><circle cx="12" cy="2.5" r="2.2" fill="#a090e0"/><path d="M11 3L4 9L10 15" stroke="#a090e0" stroke-width="2" fill="none"/><circle cx="3.5" cy="9" r="2" fill="#a090e0"/></svg>
<div class="t" style="left:69px;top:510px;font-size:12px;line-height:12px;color:#d6d6d6;">BaseFloor_M</div>
<svg style="position:absolute;left:24px;top:532px;" width="9" height="9" viewBox="0 0 9 9"><rect x="0.5" y="0.5" width="8" height="8" fill="none" stroke="#bdbdbd"/><path d="M2 4.5H7" stroke="#bdbdbd"/><path d="M4.5 2V7" stroke="#bdbdbd"/></svg>
<svg style="position:absolute;left:37px;top:528px;" width="17" height="16" viewBox="0 0 17 16"><path d="M5 1H16L11 15H0Z" fill="#d8d8d8"/><path d="M0 8H10" stroke="#e03030" stroke-width="1.6"/><path d="M8 5L12 8L8 11Z" fill="#e03030"/></svg>
<div class="t" style="left:57px;top:530px;font-size:12px;line-height:12px;color:#d6d6d6;">Group</div>
<svg style="position:absolute;left:38px;top:548px;" width="16" height="16" viewBox="0 0 16 16"><circle cx="8" cy="8" r="7.2" fill="none" stroke="#d0d0d0" stroke-width="1.2"/><circle cx="6" cy="10" r="3.2" fill="#d8d8d8"/><path d="M8 4H12V12H9L11 10V6H8Z" fill="#30c0c8"/></svg>
<div class="t" style="left:57px;top:550px;font-size:12px;line-height:12px;color:#d6d6d6;">defaultLightSet</div>
<svg style="position:absolute;left:38px;top:568px;" width="16" height="16" viewBox="0 0 16 16"><circle cx="8" cy="8" r="7.2" fill="none" stroke="#d0d0d0" stroke-width="1.2"/><circle cx="6" cy="10" r="3.2" fill="#d8d8d8"/><path d="M8 4H12V12H9L11 10V6H8Z" fill="#30c0c8"/></svg>
<div class="t" style="left:57px;top:570px;font-size:12px;line-height:12px;color:#d6d6d6;">defaultObjectSet</div>
<svg style="position:absolute;left:24px;top:592px;" width="9" height="9" viewBox="0 0 9 9"><rect x="0.5" y="0.5" width="8" height="8" fill="none" stroke="#bdbdbd"/><path d="M2 4.5H7" stroke="#bdbdbd"/><path d="M4.5 2V7" stroke="#bdbdbd"/></svg>
<svg style="position:absolute;left:38px;top:588px;" width="16" height="16" viewBox="0 0 16 16"><circle cx="8" cy="8" r="7.2" fill="none" stroke="#d0d0d0" stroke-width="1.2"/><circle cx="6" cy="10" r="3.2" fill="#d8d8d8"/><path d="M8 4H12V12H9L11 10V6H8Z" fill="#30c0c8"/></svg>
<div class="t" style="left:57px;top:590px;font-size:12px;line-height:12px;color:#d6d6d6;">RiggingSets</div>
<svg style="position:absolute;left:24px;top:612px;" width="9" height="9" viewBox="0 0 9 9"><rect x="0.5" y="0.5" width="8" height="8" fill="none" stroke="#bdbdbd"/><path d="M2 4.5H7" stroke="#bdbdbd"/><path d="M4.5 2V7" stroke="#bdbdbd"/></svg>
<svg style="position:absolute;left:38px;top:608px;" width="16" height="16" viewBox="0 0 16 16"><circle cx="8" cy="8" r="7.2" fill="none" stroke="#d0d0d0" stroke-width="1.2"/><circle cx="6" cy="10" r="3.2" fill="#d8d8d8"/><path d="M8 4H12V12H9L11 10V6H8Z" fill="#30c0c8"/></svg>
<div class="t" style="left:57px;top:610px;font-size:12px;line-height:12px;color:#d6d6d6;">Sets</div>
<svg style="position:absolute;left:24px;top:632px;" width="9" height="9" viewBox="0 0 9 9"><rect x="0.5" y="0.5" width="8" height="8" fill="none" stroke="#bdbdbd"/><path d="M2 4.5H7" stroke="#bdbdbd"/><path d="M4.5 2V7" stroke="#bdbdbd"/></svg>
<svg style="position:absolute;left:38px;top:628px;" width="16" height="16" viewBox="0 0 16 16"><circle cx="8" cy="8" r="7.2" fill="none" stroke="#d0d0d0" stroke-width="1.2"/><circle cx="6" cy="10" r="3.2" fill="#d8d8d8"/><path d="M8 4H12V12H9L11 10V6H8Z" fill="#30c0c8"/></svg>
<div class="t" style="left:57px;top:630px;font-size:12px;line-height:12px;color:#d6d6d6;">UnityPublishedSet</div>
<svg style="position:absolute;left:249px;top:229px;" width="11" height="7" viewBox="0 0 11 7"><path d="M0 6H10L5 0Z" fill="#c0c0c0"/></svg>
<div style="left:249px;top:239px;width:10px;height:776px;background:#5f5f5f;border-radius:5px"></div>
<svg style="position:absolute;left:249px;top:1018px;" width="11" height="7" viewBox="0 0 11 7"><path d="M0 0H10L5 6Z" fill="#c0c0c0"/></svg>
<div style="left:3px;top:1030px;width:257px;height:10px;background:#373737;"></div>
<svg style="position:absolute;left:5px;top:1030px;" width="7" height="10" viewBox="0 0 7 10"><path d="M6 0V10L0 5Z" fill="#b0b0b0"/></svg>
<div style="left:16px;top:1030px;width:218px;height:10px;background:#5f5f5f;border-radius:5px"></div>
<svg style="position:absolute;left:238px;top:1030px;" width="7" height="10" viewBox="0 0 7 10"><path d="M0 0V10L6 5Z" fill="#b0b0b0"/></svg>
<div style="left:88px;top:1042px;width:86px;height:2px;background-image:radial-gradient(#9a9a9a 0.6px, transparent 0.7px);background-size:3px 2px"></div>
<div class="t" style="left:277px;top:168px;font-size:12px;line-height:12px;color:#c8c8c8;">View</div>
<div class="t" style="left:317.5px;top:168px;font-size:12px;line-height:12px;color:#c8c8c8;">Shading</div>
<div class="t" style="left:375.5px;top:168px;font-size:12px;line-height:12px;color:#c8c8c8;">Lighting</div>
<div class="t" style="left:433px;top:168px;font-size:12px;line-height:12px;color:#c8c8c8;">Show</div>
<div class="t" style="left:477px;top:168px;font-size:12px;line-height:12px;color:#c8c8c8;">Renderer</div>
<div class="t" style="left:539px;top:168px;font-size:12px;line-height:12px;color:#c8c8c8;">Panels</div>
<div style="left:269px;top:183px;width:593px;height:21px;background:#444444;"></div>
<div style="left:272px;top:187px;width:2px;height:15px;background:#9a9a9a;border-radius:1px"></div>
<div style="left:377px;top:187px;width:2px;height:15px;background:#9a9a9a;border-radius:1px"></div>
<div style="left:520px;top:187px;width:2px;height:15px;background:#9a9a9a;border-radius:1px"></div>
<div style="left:665px;top:187px;width:2px;height:15px;background:#9a9a9a;border-radius:1px"></div>
<div style="left:806px;top:187px;width:2px;height:15px;background:#9a9a9a;border-radius:1px"></div>
<div style="left:529px;top:184px;width:18px;height:19px;background:#5285a6;"></div>
<div style="left:692px;top:184px;width:18px;height:19px;background:#5285a6;"></div>
<div style="left:749px;top:184px;width:18px;height:19px;background:#5285a6;"></div>
<div style="left:817px;top:184px;width:18px;height:19px;background:#5285a6;"></div>
<div style="left:855px;top:184px;width:7px;height:19px;background:#5285a6;"></div>
<svg style="position:absolute;left:280px;top:186px;" width="16" height="16" viewBox="0 0 16 16"><path d="M2 1H15V14H2Z" fill="#3aa0d0"/><path d="M1 2V15H14" stroke="#2a6080" stroke-width="1.5" fill="none"/><path d="M5.5 12L8.5 3.5L11.5 12M6.5 9.5H10.5" stroke="#fff" stroke-width="1.5" fill="none"/></svg>
<svg style="position:absolute;left:299px;top:186px;" width="16" height="16" viewBox="0 0 16 16"><rect x="2.5" y="2.5" width="11" height="11" fill="#30a8c0" stroke="#888"/><circle cx="2.5" cy="2.5" r="1.5" fill="#999"/><circle cx="13.5" cy="2.5" r="1.5" fill="#999"/><circle cx="2.5" cy="13.5" r="1.5" fill="#999"/><circle cx="13.5" cy="13.5" r="1.5" fill="#999"/></svg>
<svg style="position:absolute;left:318px;top:186px;" width="16" height="16" viewBox="0 0 16 16"><rect x="1" y="2" width="14" height="12" fill="#4a5560"/></svg>
<svg style="position:absolute;left:337px;top:186px;" width="16" height="16" viewBox="0 0 16 16"><circle cx="8" cy="8" r="6.5" fill="#5a5050"/></svg>
<svg style="position:absolute;left:356px;top:186px;" width="16" height="16" viewBox="0 0 16 16"><rect x="1" y="4" width="12" height="11" fill="#405a58"/><rect x="3" y="2" width="12" height="11" fill="#4a5a50"/></svg>
<svg style="position:absolute;left:385px;top:186px;" width="16" height="16" viewBox="0 0 16 16"><path d="M1 5H10V12H1Z" fill="#c8c8c8"/><path d="M11 8.5L15 5V12Z" fill="#c8c8c8"/></svg>
<svg style="position:absolute;left:404px;top:186px;" width="16" height="16" viewBox="0 0 16 16"><path d="M1 5H10V12H1Z" fill="#c8c8c8"/><path d="M11 8.5L15 5V12Z" fill="#c8c8c8"/><rect x="1" y="9" width="6" height="6" fill="#30b0c0"/></svg>
<svg style="position:absolute;left:424px;top:186px;" width="16" height="16" viewBox="0 0 16 16"><path d="M1 5H10V12H1Z" fill="#c8c8c8"/><path d="M11 8.5L15 5V12Z" fill="#c8c8c8"/><circle cx="5" cy="12" r="3" fill="none" stroke="#30b0c0" stroke-width="1.6"/></svg>
<svg style="position:absolute;left:445px;top:186px;" width="16" height="16" viewBox="0 0 16 16"><path d="M4 1H11V14L7.5 11L4 14Z" fill="#b8b8b8"/></svg>
<svg style="position:absolute;left:463px;top:186px;" width="16" height="16" viewBox="0 0 16 16"><path d="M3 14L13 3V14Z" fill="#30a8c0"/><path d="M1 15H15" stroke="#999"/></svg>
<svg style="position:absolute;left:482px;top:186px;" width="16" height="16" viewBox="0 0 16 16"><circle cx="10" cy="10" r="3.5" fill="none" stroke="#30b0c0" stroke-width="1.6"/><path d="M12.5 12.5L15 15" stroke="#30b0c0" stroke-width="1.8"/><path d="M1 7H8M5 2V10" stroke="#ccc" stroke-width="1.2"/></svg>
<svg style="position:absolute;left:501px;top:186px;" width="16" height="16" viewBox="0 0 16 16"><path d="M2 14L13 3L15 5L4 15Z" fill="#30b0c0"/></svg>
<svg style="position:absolute;left:530px;top:186px;" width="16" height="16" viewBox="0 0 16 16"><rect x="2" y="2" width="12" height="12" fill="none" stroke="#eee" stroke-width="1.2"/><path d="M6 2V14M10 2V14M2 6H14M2 10H14" stroke="#eee" stroke-width="1.2"/></svg>
<svg style="position:absolute;left:548px;top:186px;" width="17" height="16" viewBox="0 0 17 16"><rect x="1.5" y="3.5" width="14" height="10" fill="none" stroke="#ddd"/><path d="M1.5 5.5H15.5M1.5 11.5H15.5" stroke="#ddd"/></svg>
<svg style="position:absolute;left:567px;top:186px;" width="17" height="16" viewBox="0 0 17 16"><rect x="1.5" y="2.5" width="14" height="11" fill="none" stroke="#ddd"/><circle cx="8.5" cy="8" r="2.5" fill="#30b0c0"/></svg>
<div style="left:585px;top:184px;width:18px;height:19px;background:#3a3a3a;border:1px solid #2a2a2a;box-sizing:border-box"></div>
<svg style="position:absolute;left:586px;top:186px;" width="17" height="16" viewBox="0 0 17 16"><circle cx="8.5" cy="8" r="4" fill="#555"/></svg>
<svg style="position:absolute;left:605px;top:186px;" width="17" height="16" viewBox="0 0 17 16"><rect x="1.5" y="2.5" width="14" height="11" fill="none" stroke="#ddd"/><path d="M3 8H14M8.5 3V13" stroke="#30b0c0" stroke-dasharray="1.5 1"/></svg>
<svg style="position:absolute;left:624px;top:186px;" width="17" height="16" viewBox="0 0 17 16"><rect x="1.5" y="2.5" width="14" height="11" fill="none" stroke="#ddd"/><path d="M3 12L7 7L10 12Z" fill="#30b0c0"/><circle cx="11.5" cy="6" r="2" fill="#30b0c0"/></svg>
<svg style="position:absolute;left:643px;top:186px;" width="17" height="16" viewBox="0 0 17 16"><rect x="1.5" y="2.5" width="14" height="11" fill="none" stroke="#ddd"/><path d="M5 5H12M8.5 5V12" stroke="#30b0c0" stroke-width="1.8"/></svg>
<svg style="position:absolute;left:673px;top:186px;" width="17" height="17" viewBox="0 0 17 17"><path d="M8.5 1L15 4.5V12L8.5 15.5L2 12V4.5Z" fill="none" stroke="#ccc"/><path d="M2 4.5L8.5 8L15 4.5M8.5 8V15.5" stroke="#ccc" fill="none"/></svg>
<svg style="position:absolute;left:692px;top:186px;" width="17" height="17" viewBox="0 0 17 17"><path d="M8.5 1L15 4.5V12L8.5 15.5L2 12V4.5Z" fill="#50c0d8" stroke="#a8f0ff"/><path d="M2 4.5L8.5 8L15 4.5M8.5 8V15.5" stroke="#a8f0ff" fill="none"/></svg>
<svg style="position:absolute;left:711px;top:186px;" width="17" height="17" viewBox="0 0 17 17"><circle cx="8.5" cy="8.5" r="6.5" fill="#ddd"/><path d="M8.5 2A6.5 6.5 0 0 1 8.5 15Z" fill="#555"/></svg>
<svg style="position:absolute;left:730px;top:186px;" width="17" height="17" viewBox="0 0 17 17"><path d="M8.5 1L15 4.5V12L8.5 15.5L2 12V4.5Z" fill="#2a6878" stroke="#ccc"/><path d="M2 4.5L8.5 8L15 4.5M8.5 8V15.5" stroke="#ccc" fill="none"/></svg>
<svg style="position:absolute;left:749px;top:186px;" width="17" height="17" viewBox="0 0 17 17"><circle cx="8.5" cy="8.5" r="6.5" fill="#333" stroke="#eee" stroke-dasharray="1 1" stroke-width="2"/></svg>
<svg style="position:absolute;left:768px;top:186px;" width="17" height="17" viewBox="0 0 17 17"><circle cx="8.5" cy="7" r="3.5" fill="#ddd"/><path d="M7 11H10V14H7Z" fill="#ddd"/><path d="M2 3L4 4M15 3L13 4M1 8H3M14 8H16" stroke="#ddd"/></svg>
<svg style="position:absolute;left:787px;top:186px;" width="17" height="17" viewBox="0 0 17 17"><circle cx="11" cy="9" r="5" fill="#30b0c0"/><path d="M1 13L6 10" stroke="#aaa" stroke-width="2"/></svg>
<svg style="position:absolute;left:817px;top:186px;" width="18" height="17" viewBox="0 0 18 17"><circle cx="9" cy="7" r="5" fill="#ddd"/><path d="M2 12L9 16L16 12L9 9Z" fill="#30a8c0" stroke="#ddd" stroke-width="0.6"/></svg>
<svg style="position:absolute;left:836px;top:186px;" width="17" height="17" viewBox="0 0 17 17"><circle cx="6" cy="11" r="4" fill="#666"/><circle cx="11" cy="6" r="4" fill="#ddd"/></svg>
<svg style="position:absolute;left:855px;top:186px;" width="7" height="17" viewBox="0 0 7 17"><circle cx="9" cy="8.5" r="6" fill="none" stroke="#30b0c0" stroke-width="1.5"/><circle cx="9" cy="8.5" r="3" fill="none" stroke="#30b0c0" stroke-width="1.5"/></svg>
<div class="t" style="left:284px;top:207px;font-size:11px;line-height:11px;color:#eeeeee;font-weight:bold">Verts:</div>
<div class="t" style="left:381px;top:207px;font-size:11px;line-height:11px;color:#eeeeee;font-weight:bold">205</div>
<div class="t" style="left:458px;top:207px;font-size:11px;line-height:11px;color:#eeeeee;font-weight:bold">0</div>
<div class="t" style="left:522px;top:207px;font-size:11px;line-height:11px;color:#eeeeee;font-weight:bold">0</div>
<div class="t" style="left:284px;top:227px;font-size:11px;line-height:11px;color:#eeeeee;font-weight:bold">Edges:</div>
<div class="t" style="left:381px;top:227px;font-size:11px;line-height:11px;color:#eeeeee;font-weight:bold">584</div>
<div class="t" style="left:458px;top:227px;font-size:11px;line-height:11px;color:#eeeeee;font-weight:bold">0</div>
<div class="t" style="left:522px;top:227px;font-size:11px;line-height:11px;color:#eeeeee;font-weight:bold">0</div>
<div class="t" style="left:284px;top:247px;font-size:11px;line-height:11px;color:#eeeeee;font-weight:bold">Faces:</div>
<div class="t" style="left:381px;top:247px;font-size:11px;line-height:11px;color:#eeeeee;font-weight:bold">385</div>
<div class="t" style="left:458px;top:247px;font-size:11px;line-height:11px;color:#eeeeee;font-weight:bold">0</div>
<div class="t" style="left:522px;top:247px;font-size:11px;line-height:11px;color:#eeeeee;font-weight:bold">0</div>
<div class="t" style="left:284px;top:267px;font-size:11px;line-height:11px;color:#eeeeee;font-weight:bold">Tris:</div>
<div class="t" style="left:381px;top:267px;font-size:11px;line-height:11px;color:#eeeeee;font-weight:bold">385</div>
<div class="t" style="left:458px;top:267px;font-size:11px;line-height:11px;color:#eeeeee;font-weight:bold">0</div>
<div class="t" style="left:522px;top:267px;font-size:11px;line-height:11px;color:#eeeeee;font-weight:bold">0</div>
<div class="t" style="left:284px;top:287px;font-size:11px;line-height:11px;color:#eeeeee;font-weight:bold">UVs:</div>
<div class="t" style="left:381px;top:287px;font-size:11px;line-height:11px;color:#eeeeee;font-weight:bold">323</div>
<div class="t" style="left:458px;top:287px;font-size:11px;line-height:11px;color:#eeeeee;font-weight:bold">0</div>
<div class="t" style="left:522px;top:287px;font-size:11px;line-height:11px;color:#eeeeee;font-weight:bold">0</div>
<div class="t" style="left:284px;top:307px;font-size:11px;line-height:11px;color:#eeeeee;font-weight:bold">Particles:</div>
<div class="t" style="left:428px;top:307px;font-size:11px;line-height:11px;color:#eeeeee;font-weight:bold">0</div>
<div class="t" style="left:458px;top:307px;font-size:11px;line-height:11px;color:#eeeeee;font-weight:bold">0</div>
<svg style="position:absolute;left:777px;top:234px;" width="54" height="58" viewBox="0 0 54 58"><path d="M5 8L8 3H46L49 8Z" fill="#9a9a9a"/><path d="M3 8H51V57H4Z" fill="#b4b4b4"/><path d="M3 8H51V20H3Z" fill="#bcbcbc"/><text x="27" y="36" text-anchor="middle" font-family="Liberation Sans" font-size="10" font-weight="bold" fill="#555" letter-spacing="0.5">FRONT</text></svg>
<svg style="position:absolute;left:286px;top:994px;" width="30" height="30" viewBox="0 0 30 30"><text x="7" y="9" font-family="Liberation Sans" font-size="8" font-weight="bold" fill="#10e010">y</text><path d="M9.5 11V25" stroke="#10e010" stroke-width="1"/><path d="M9.5 24.5H20" stroke="#ff1010" stroke-width="1"/><text x="20" y="21" font-family="Liberation Sans" font-size="8" font-weight="bold" fill="#ff1010">x</text><path d="M7 24.5H12M9.5 22V27" stroke="#1010ff" stroke-width="1.2"/></svg>
<svg style="position:absolute;left:0;top:0" width="1919" height="1050" viewBox="0 0 1919 1050"><defs><clipPath id="vp"><rect x="269" y="204" width="593" height="842"/></clipPath><clipPath id="ringclip"><rect x="0" y="0" width="476" height="1050"/><rect x="615" y="0" width="400" height="1050"/></clipPath><radialGradient id="rim"><stop offset="0.55" stop-color="#6a2410"/><stop offset="0.75" stop-color="#8a4020"/><stop offset="0.88" stop-color="#a06a40" stop-opacity="0.6"/><stop offset="1" stop-color="#b09058" stop-opacity="0"/></radialGradient><radialGradient id="ew" cx="0.45" cy="0.4"><stop offset="0" stop-color="#fffaf0"/><stop offset="0.75" stop-color="#f0e4cc"/><stop offset="1" stop-color="#d8b898"/></radialGradient><linearGradient id="face" x1="0" y1="0" x2="0" y2="1"><stop offset="0" stop-color="#d0c48c"/><stop offset="0.6" stop-color="#c6b880"/><stop offset="1" stop-color="#b4a46c"/></linearGradient><linearGradient id="hat" x1="0" y1="0" x2="0" y2="1"><stop offset="0" stop-color="#c8c0ac"/><stop offset="1" stop-color="#b8b09a"/></linearGradient><linearGradient id="torso" x1="0" y1="0" x2="0" y2="1"><stop offset="0" stop-color="#c6b47c"/><stop offset="0.6" stop-color="#b8a46c"/><stop offset="1" stop-color="#a08a58"/></linearGradient></defs><g clip-path="url(#vp)"><ellipse cx="543.5" cy="848.5" rx="163" ry="95.5" fill="none" stroke="#f09898" stroke-width="1.2"/><ellipse cx="545" cy="835" rx="109.5" ry="63" fill="none" stroke="#2040a8" stroke-width="1"/><text x="536" y="921" text-anchor="middle" font-family="Liberation Sans" font-size="33" textLength="156" lengthAdjust="spacingAndGlyphs" fill="none" stroke="#181818" stroke-width="0.8">Zombies</text><path d="M492 577L422 610L346 684L350 702L367 712L422 680L476 652Z" fill="#c2b078"/><path d="M422 610L346 684L395 672L455 628Z" fill="#ccbc88"/><path d="M410 662L350 702L367 712L430 676Z" fill="#a89660"/><path d="M622 580L664 612L742 686L738 704L729 714L670 680L614 654Z" fill="#c6b47c"/><path d="M664 612L742 686L695 672L636 628Z" fill="#cfbf8a"/><path d="M680 662L738 704L729 714L660 676Z" fill="#aa9862"/><path d="M472 600L490 577L540 570L622 582L617 640L613 697L478 697L474 640Z" fill="url(#torso)"/><path d="M490 577L540 570L622 582L615 625L540 620L478 625Z" fill="#c8b680" opacity="0.7"/><ellipse cx="545" cy="660" rx="45" ry="18" fill="#9a8858" opacity="0.45"/><path d="M472 600L490 577L486 660L478 697L474 640Z" fill="#9a8a58" opacity="0.6"/><path d="M478 688H613V697H478Z" fill="#8a784a"/><path d="M478 697H613V726H478Z" fill="#66707e"/><path d="M477 726L524 731L519 822L472 822Z" fill="#565c68"/><path d="M567 731L613 726L619 822L566 822Z" fill="#5a606c"/><path d="M524 731L567 731L562 745L530 745Z" fill="#4a4e58"/><path d="M510 745L524 731L519 806L512 806Z M580 745L567 731L566 806L574 806Z" fill="#3e424c"/><path d="M466 808H523L520 857H470Z" fill="#c6b486"/><path d="M563 808H621L618 857H568Z" fill="#c6b486"/><path d="M472 830H520V857H472Z M568 830H618V857H568Z" fill="#e4d8b0" opacity="0.55"/><path d="M478 832V855M486 834V857M494 833V857M503 832V856M511 834V855M576 832V855M584 834V857M592 833V857M601 832V856M609 834V855" stroke="#9a8a60" stroke-width="1.4" opacity="0.7"/><rect x="533" y="806" width="27" height="40" fill="#262626" /><path d="M474 768L465 807V857H523V807L523 766M465 807H523" fill="none" stroke="#ff1a1a" stroke-width="3"/><path d="M562 766L562 807V857H621V807L616 766M562 807H621" fill="none" stroke="#ff1a1a" stroke-width="3"/><path d="M487 778V868M590 778V868" stroke="#ff3030" stroke-width="1"/><path d="M543 810V845M531 826H556" stroke="#f0f020" stroke-width="2"/><path d="M450 462L456 535L491 571L536 583L585 569L623 540L627 462L540 438Z" fill="url(#face)"/><ellipse cx="492.7" cy="493" rx="35" ry="38" fill="url(#rim)"/><ellipse cx="581.3" cy="493" rx="37" ry="38" fill="url(#rim)"/><ellipse cx="496.7" cy="490.3" rx="23" ry="25.5" fill="url(#ew)"/><ellipse cx="577" cy="490" rx="24.7" ry="26" fill="url(#ew)"/><circle cx="500.4" cy="487.5" r="8" fill="#080808"/><circle cx="572.5" cy="487.5" r="8" fill="#080808"/><circle cx="503" cy="484" r="2" fill="#fff"/><circle cx="575" cy="484" r="2" fill="#fff"/><path d="M536 501L528 520Q536 514 545 520Z" fill="#4a3018"/><path d="M503 552Q537 530 572 552Q560 570 537 570Q514 570 503 552Z" fill="#7a2e16"/><path d="M513 552Q537 541 562 552L560 563Q537 568 515 563Z" fill="#5a1a0a"/><path d="M517 553H524V562H517Z M526 553H534V562H526Z M536 553H544V562H536Z M546 553H553V562H546Z" fill="#eee2c8"/><path d="M458 470Q470 520 488 540M615 470Q605 520 585 540" stroke="#a06a40" stroke-width="2" fill="none" opacity="0.5"/><path d="M448 391L467 363L530 341L613 363L629 391L629 444L527 432L449 446Z" fill="url(#hat)"/><path d="M448 391L530 410L629 391L629 444L527 432L449 446Z" fill="#bcb49e" opacity="0.5"/><path d="M526 342L534 339.5L556 343.5L551 347L531 344Z" fill="#4a5a68"/><path d="M431 392C445 405 470 432 484 452C500 470 520 484 536 485C552 484 572 470 585 453C600 432 630 402 651 392C656 388 654 384 648 386C640 392 633 405 628 414" fill="none" stroke="#48c8f8" stroke-width="2.2"/><path d="M431 392C428 386 432 383 438 388L447 403" fill="none" stroke="#48c8f8" stroke-width="2.2"/><path d="M436 458L454.5 442L526.6 429.6L606 442L629.4 451.4L632.6 458L632.6 463.6L606 452L526.6 442L436 464.4Z" fill="#62727f"/><path d="M436 458L454.5 442L526.6 429.6L526.6 442L436 464.4Z" fill="#56646f"/><path d="M436 464.4L526.6 442L606 452L632.6 463.6L606 455L526.6 446L440 466Z" fill="#33404a"/><path d="M500 581Q537 612 589 577" fill="none" stroke="#48c8f8" stroke-width="2.2"/><ellipse cx="440" cy="605" rx="10" ry="26" transform="rotate(-30 440 605)" fill="none" stroke="#48c8f8" stroke-width="2.2"/><ellipse cx="648" cy="606" rx="10" ry="26" transform="rotate(30 648 606)" fill="none" stroke="#48c8f8" stroke-width="2.2"/><path d="M402 628Q410 620 416 632M682 630Q690 622 686 636M428 660L432 650M658 660L654 650" fill="none" stroke="#48c8f8" stroke-width="2"/><g clip-path="url(#ringclip)"><ellipse cx="544" cy="645" rx="73" ry="44" fill="none" stroke="#48c8f8" stroke-width="2.4"/></g><path d="M471 645A73 44 0 0 0 617 645" fill="none" stroke="#48c8f8" stroke-width="2.4"/><g clip-path="url(#ringclip)"><ellipse cx="544" cy="673" rx="72" ry="24" fill="none" stroke="#48c8f8" stroke-width="2.4"/></g><path d="M472 673A72 24 0 0 0 616 673" fill="none" stroke="#48c8f8" stroke-width="2.4"/><g clip-path="url(#ringclip)"><ellipse cx="545" cy="699" rx="78" ry="29" fill="none" stroke="#48c8f8" stroke-width="2.4"/></g><path d="M467 699A78 29 0 0 0 623 699" fill="none" stroke="#48c8f8" stroke-width="2.4"/><g clip-path="url(#ringclip)"><ellipse cx="545" cy="716" rx="86" ry="33" fill="none" stroke="#48c8f8" stroke-width="2.4"/></g><path d="M459 716A86 33 0 0 0 631 716" fill="none" stroke="#48c8f8" stroke-width="2.4"/><path d="M479 720L430 712L432 704L400 708L382 712L404 722L412 716L432 718L430 712" fill="none" stroke="#20e030" stroke-width="1.4"/><path d="M610 720L660 712L658 704L690 708L709 712L687 722L679 716L659 718L660 712" fill="none" stroke="#20e030" stroke-width="1.4"/><path d="M545 732L539 767H524L524 776H496L533 797L576 777H552V767H539" fill="none" stroke="#20e030" stroke-width="1.4"/><path d="M418 538H422V549H433V553H422V564H418V553H407V549H418Z" fill="none" stroke="#2030ff" stroke-width="1.3"/><path d="M665 538H669V549H680V553H669V564H665V553H654V549H665Z" fill="none" stroke="#2030ff" stroke-width="1.3"/><path d="M440 725H444V735H454V739H444V749H440V739H430V735H440Z" fill="none" stroke="#2030ff" stroke-width="1.3"/><path d="M647 726H651V736H661V740H651V750H647V740H637V736H647Z" fill="none" stroke="#2030ff" stroke-width="1.3"/><path d="M454 560C450 575 462 610 470 628L484 622C478 600 470 575 460 556Z" fill="none" stroke="#f0f060" stroke-width="2"/><path d="M602 570L592 630M588 600L586 612" stroke="#f0f060" stroke-width="2"/><path d="M456 663L462 671L456 679L450 671Z" fill="none" stroke="#f0f060" stroke-width="1.4"/><circle cx="456" cy="671" r="5" fill="none" stroke="#f0f060" stroke-width="1.4"/></g></svg>
<div class="t" style="left:879px;top:184px;font-size:12px;line-height:12px;color:#c8c8c8;">File</div>
<div class="t" style="left:912px;top:184px;font-size:12px;line-height:12px;color:#c8c8c8;">Edit</div>
<div class="t" style="left:947px;top:184px;font-size:12px;line-height:12px;color:#c8c8c8;">View</div>
<div class="t" style="left:987px;top:184px;font-size:12px;line-height:12px;color:#c8c8c8;">Go</div>
<div class="t" style="left:1017px;top:184px;font-size:12px;line-height:12px;color:#c8c8c8;">Output</div>
<div class="t" style="left:1070px;top:184px;font-size:12px;line-height:12px;color:#c8c8c8;">Command</div>
<div class="t" style="left:1137px;top:184px;font-size:12px;line-height:12px;color:#c8c8c8;">Help</div>
<svg style="position:absolute;left:878px;top:208px;" width="22" height="28" viewBox="0 0 22 28"><path d="M6.5 3.5H13L17.5 8V21.5H6.5Z" fill="none" stroke="#e8e8e8" stroke-width="1.8"/><path d="M2.5 8.5H9.5L13.5 12.5V26H2.5Z" fill="#444" stroke="#e8e8e8" stroke-width="1.8"/></svg>
<svg style="position:absolute;left:878px;top:250px;" width="22" height="24" viewBox="0 0 22 24"><circle cx="12" cy="9.5" r="7" fill="none" stroke="#b8b8b8" stroke-width="2"/><path d="M7 14.5L1.5 21" stroke="#b8b8b8" stroke-width="2.2"/></svg>
<svg style="position:absolute;left:880px;top:290px;" width="18" height="24" viewBox="0 0 18 24"><path d="M2 2H16V22L9 16L2 22Z" fill="none" stroke="#b8b8b8" stroke-width="2"/></svg>
<svg style="position:absolute;left:878px;top:996px;" width="22" height="22" viewBox="0 0 22 22"><circle cx="11" cy="11" r="6.5" fill="none" stroke="#a8a8a8" stroke-width="4"/><path d="M11 1.5V5M11 17V20.5M1.5 11H5M17 11H20.5M4.3 4.3L6.8 6.8M15.2 15.2L17.7 17.7M4.3 17.7L6.8 15.2M15.2 6.8L17.7 4.3" stroke="#a8a8a8" stroke-width="3"/></svg>
<div class="t" style="left:914.5px;top:206px;font-size:12px;line-height:12px;color:#f0f0f0;">OUTPUT</div>
<div style="left:914px;top:221px;width:43px;height:1px;background:#b0b0b0;"></div>
<div style="left:1305px;top:202px;width:84px;height:18px;background:#5a5a5a;border-radius:3px"></div>
<div style="left:1369px;top:202px;width:1px;height:18px;background:#444;"></div>
<div class="t" style="left:1308px;top:206px;font-size:12px;line-height:12px;color:#d0d0d0;">Normal</div>
<svg style="position:absolute;left:1374px;top:207px;" width="10" height="6" viewBox="0 0 10 6"><path d="M0 0H10L5 6Z" fill="#c8c8c8"/></svg>
<svg style="position:absolute;left:1395px;top:203px;" width="14" height="14" viewBox="0 0 14 14"><path d="M1 1H10L13 4V13H1Z" fill="#b8b8b8"/><rect x="3.5" y="8" width="7" height="3.5" fill="#1e1e1e"/><rect x="4" y="1" width="5" height="3" fill="#1e1e1e"/></svg>
<svg style="position:absolute;left:1417px;top:203px;" width="14" height="14" viewBox="0 0 14 14"><path d="M1 2H9M1 5H8M1 8H8M1 11H9" stroke="#b8b8b8" stroke-width="1.4"/><path d="M8 4L13 10M13 4L8 10" stroke="#b8b8b8" stroke-width="2.4"/></svg>
<div class="t" style="left:913px;top:225px;font-size:11px;line-height:11px;color:#d6d6d6;font-family:'Liberation Mono',monospace;letter-spacing:-0.6px">    if cmds.workspaceControl(workspace_id, q=True, exists=True):</div>
<div class="t" style="left:913px;top:238px;font-size:11px;line-height:11px;color:#d6d6d6;font-family:'Liberation Mono',monospace;letter-spacing:-0.6px">        cmds.deleteUI(workspace_id)</div>
<div class="t" style="left:913px;top:264px;font-size:11px;line-height:11px;color:#d6d6d6;font-family:'Liberation Mono',monospace;letter-spacing:-0.6px">    # Create the workspace control (dockable panel)</div>
<div class="t" style="left:913px;top:277px;font-size:11px;line-height:11px;color:#d6d6d6;font-family:'Liberation Mono',monospace;letter-spacing:-0.6px">    cmds.workspaceControl(</div>
<div class="t" style="left:913px;top:290px;font-size:11px;line-height:11px;color:#d6d6d6;font-family:'Liberation Mono',monospace;letter-spacing:-0.6px">        workspace_id,</div>
<div class="t" style="left:913px;top:303px;font-size:11px;line-height:11px;color:#d6d6d6;font-family:'Liberation Mono',monospace;letter-spacing:-0.6px">        label=PublisherUI.WINDOW_TITLE,</div>
<div class="t" style="left:913px;top:316px;font-size:11px;line-height:11px;color:#d6d6d6;font-family:'Liberation Mono',monospace;letter-spacing:-0.6px">        initialWidth=PublisherUI.WINDOW_SIZE[0],</div>
<div class="t" style="left:913px;top:329px;font-size:11px;line-height:11px;color:#d6d6d6;font-family:'Liberation Mono',monospace;letter-spacing:-0.6px">        initialHeight=PublisherUI.WINDOW_SIZE[1],</div>
<div class="t" style="left:913px;top:342px;font-size:11px;line-height:11px;color:#d6d6d6;font-family:'Liberation Mono',monospace;letter-spacing:-0.6px">        minimumWidth=400,</div>
<div class="t" style="left:913px;top:355px;font-size:11px;line-height:11px;color:#d6d6d6;font-family:'Liberation Mono',monospace;letter-spacing:-0.6px">        retain=False,</div>
<div class="t" style="left:913px;top:368px;font-size:11px;line-height:11px;color:#d6d6d6;font-family:'Liberation Mono',monospace;letter-spacing:-0.6px">        floating=True,</div>
<div class="t" style="left:913px;top:381px;font-size:11px;line-height:11px;color:#d6d6d6;font-family:'Liberation Mono',monospace;letter-spacing:-0.6px">        uiScript="import SV_Publisher_v08; SV_Publisher_v08._restore_ui()",</div>
<div class="t" style="left:913px;top:394px;font-size:11px;line-height:11px;color:#d6d6d6;font-family:'Liberation Mono',monospace;letter-spacing:-0.6px">    )</div>
<div class="t" style="left:913px;top:433px;font-size:11px;line-height:11px;color:#d6d6d6;font-family:'Liberation Mono',monospace;letter-spacing:-0.6px">def _restore_ui():</div>
<div class="t" style="left:913px;top:446px;font-size:11px;line-height:11px;color:#d6d6d6;font-family:'Liberation Mono',monospace;letter-spacing:-0.6px">    """</div>
<div class="t" style="left:913px;top:459px;font-size:11px;line-height:11px;color:#d6d6d6;font-family:'Liberation Mono',monospace;letter-spacing:-0.6px">    Called by Maya's workspaceControl to (re)build the widget inside the dock.</div>
<div class="t" style="left:913px;top:472px;font-size:11px;line-height:11px;color:#d6d6d6;font-family:'Liberation Mono',monospace;letter-spacing:-0.6px">    This is the uiScript callback - Maya calls it when the panel is created</div>
<div class="t" style="left:913px;top:485px;font-size:11px;line-height:11px;color:#d6d6d6;font-family:'Liberation Mono',monospace;letter-spacing:-0.6px">    or restored from a saved layout.</div>
<div class="t" style="left:913px;top:498px;font-size:11px;line-height:11px;color:#d6d6d6;font-family:'Liberation Mono',monospace;letter-spacing:-0.6px">    """</div>
<div class="t" style="left:913px;top:511px;font-size:11px;line-height:11px;color:#d6d6d6;font-family:'Liberation Mono',monospace;letter-spacing:-0.6px">    global _publisher_instance</div>
<div class="t" style="left:913px;top:537px;font-size:11px;line-height:11px;color:#d6d6d6;font-family:'Liberation Mono',monospace;letter-spacing:-0.6px">    workspace_id = PublisherUI.WORKSPACE_ID</div>
<div class="t" style="left:913px;top:563px;font-size:11px;line-height:11px;color:#d6d6d6;font-family:'Liberation Mono',monospace;letter-spacing:-0.6px">    # Get the Maya layout that hosts this workspace control</div>
<div class="t" style="left:913px;top:576px;font-size:11px;line-height:11px;color:#d6d6d6;font-family:'Liberation Mono',monospace;letter-spacing:-0.6px">    ptr = omui.MQtUtil.findControl(workspace_id)</div>
<div class="t" style="left:913px;top:589px;font-size:11px;line-height:11px;color:#d6d6d6;font-family:'Liberation Mono',monospace;letter-spacing:-0.6px">    if ptr is None:</div>
<div class="t" style="left:913px;top:602px;font-size:11px;line-height:11px;color:#d6d6d6;font-family:'Liberation Mono',monospace;letter-spacing:-0.6px">        return</div>
<div class="t" style="left:913px;top:628px;font-size:11px;line-height:11px;color:#d6d6d6;font-family:'Liberation Mono',monospace;letter-spacing:-0.6px">    workspace_widget = wrapInstance(int(ptr), QtWidgets.QWidget)</div>
<div class="t" style="left:913px;top:654px;font-size:11px;line-height:11px;color:#d6d6d6;font-family:'Liberation Mono',monospace;letter-spacing:-0.6px">    # Create the publisher widget inside the workspace</div>
<div class="t" style="left:913px;top:667px;font-size:11px;line-height:11px;color:#d6d6d6;font-family:'Liberation Mono',monospace;letter-spacing:-0.6px">    _publisher_instance = PublisherUI(parent=workspace_widget)</div>
<div class="t" style="left:913px;top:693px;font-size:11px;line-height:11px;color:#d6d6d6;font-family:'Liberation Mono',monospace;letter-spacing:-0.6px">    # Add it to the workspace layout</div>
<div class="t" style="left:913px;top:706px;font-size:11px;line-height:11px;color:#d6d6d6;font-family:'Liberation Mono',monospace;letter-spacing:-0.6px">    layout = workspace_widget.layout()</div>
<div class="t" style="left:913px;top:719px;font-size:11px;line-height:11px;color:#d6d6d6;font-family:'Liberation Mono',monospace;letter-spacing:-0.6px">    if layout is None:</div>
<div class="t" style="left:913px;top:732px;font-size:11px;line-height:11px;color:#d6d6d6;font-family:'Liberation Mono',monospace;letter-spacing:-0.6px">        layout = QtWidgets.QVBoxLayout(workspace_widget)</div>
<div class="t" style="left:913px;top:745px;font-size:11px;line-height:11px;color:#d6d6d6;font-family:'Liberation Mono',monospace;letter-spacing:-0.6px">        layout.setContentsMargins(0, 0, 0, 0)</div>
<div class="t" style="left:913px;top:758px;font-size:11px;line-height:11px;color:#d6d6d6;font-family:'Liberation Mono',monospace;letter-spacing:-0.6px">    layout.addWidget(_publisher_instance)</div>
<div class="t" style="left:913px;top:784px;font-size:11px;line-height:11px;color:#d6d6d6;font-family:'Liberation Mono',monospace;letter-spacing:-0.6px">ToggleShelf;</div>
<div class="t" style="left:913px;top:797px;font-size:11px;line-height:11px;color:#e6e63c;font-family:'Liberation Mono',monospace;letter-spacing:-0.6px">// Warning: Panel size cannot accommodate all requested Heads Up Display elements. //</div>
<div class="t" style="left:913px;top:810px;font-size:11px;line-height:11px;color:#d6d6d6;font-family:'Liberation Mono',monospace;letter-spacing:-0.6px">import sys</div>
<div class="t" style="left:913px;top:823px;font-size:11px;line-height:11px;color:#d6d6d6;font-family:'Liberation Mono',monospace;letter-spacing:-0.6px">import maya.cmds</div>
<div class="t" style="left:913px;top:849px;font-size:11px;line-height:11px;color:#d6d6d6;font-family:'Liberation Mono',monospace;letter-spacing:-0.6px"># path folder:</div>
<div class="t" style="left:913px;top:862px;font-size:11px;line-height:11px;color:#d6d6d6;font-family:'Liberation Mono',monospace;letter-spacing:-0.6px">path = r"C:\Users\Lozita\Desktop\Survival_Game\Survival_Project\Scripts"</div>
<div class="t" style="left:913px;top:875px;font-size:11px;line-height:11px;color:#d6d6d6;font-family:'Liberation Mono',monospace;letter-spacing:-0.6px">if path not in sys.path:</div>
<div class="t" style="left:913px;top:888px;font-size:11px;line-height:11px;color:#d6d6d6;font-family:'Liberation Mono',monospace;letter-spacing:-0.6px">    sys.path.insert(0, path)</div>
<div class="t" style="left:913px;top:914px;font-size:11px;line-height:11px;color:#d6d6d6;font-family:'Liberation Mono',monospace;letter-spacing:-0.6px">import importlib</div>
<div class="t" style="left:913px;top:927px;font-size:11px;line-height:11px;color:#d6d6d6;font-family:'Liberation Mono',monospace;letter-spacing:-0.6px">import SV_Publisher_v07 as pub</div>
<div class="t" style="left:913px;top:940px;font-size:11px;line-height:11px;color:#d6d6d6;font-family:'Liberation Mono',monospace;letter-spacing:-0.6px">importlib.reload(pub)</div>
<div class="t" style="left:913px;top:953px;font-size:11px;line-height:11px;color:#d6d6d6;font-family:'Liberation Mono',monospace;letter-spacing:-0.6px">pub.show()</div>
<div class="t" style="left:913px;top:966px;font-size:11px;line-height:11px;color:#d6d6d6;font-family:'Liberation Mono',monospace;letter-spacing:-0.6px">layout -e -height 105 ShelfLayout;</div>
<div class="t" style="left:913px;top:979px;font-size:11px;line-height:11px;color:#3ec43e;font-family:'Liberation Mono',monospace;letter-spacing:-0.6px">// Result: ShelfLayout //</div>
<div style="left:1421px;top:222px;width:12px;height:791px;background:#333333;"></div>
<svg style="position:absolute;left:1422px;top:229px;" width="11" height="7" viewBox="0 0 11 7"><path d="M0 6H10L5 0Z" fill="#b8b8b8"/></svg>
<div style="left:1422px;top:976px;width:10px;height:24px;background:#5f5f5f;border-radius:5px"></div>
<svg style="position:absolute;left:1422px;top:1004px;" width="11" height="7" viewBox="0 0 11 7"><path d="M0 0H10L5 6Z" fill="#b8b8b8"/></svg>
<div style="left:909px;top:1013px;width:512px;height:12px;background:#333333;"></div>
<svg style="position:absolute;left:912px;top:1014px;" width="6" height="10" viewBox="0 0 6 10"><path d="M6 0V10L0 5Z" fill="#b8b8b8"/></svg>
<div style="left:923px;top:1014px;width:476px;height:10px;background:#5f5f5f;border-radius:5px"></div>
<svg style="position:absolute;left:1411px;top:1014px;" width="6" height="10" viewBox="0 0 6 10"><path d="M0 0V10L6 5Z" fill="#b8b8b8"/></svg>
<div class="t" style="left:880px;top:1032px;font-size:12px;line-height:12px;color:#c8c8c8;">Python</div>
<div style="left:916px;top:1030px;width:211px;height:20px;background:#ffffff;border:1px solid #bdbdbd;box-sizing:border-box"></div>
<div class="t" style="left:922px;top:1034px;font-size:12px;line-height:12px;color:#1a1a1a;">projects.ts - Web - Visual Studio Code</div>
<div class="t" style="left:1251px;top:1033px;font-size:11.5px;line-height:11.5px;color:#c0c0c0;">Ln 1579</div>
<div class="t" style="left:1309px;top:1033px;font-size:11.5px;line-height:11.5px;color:#c0c0c0;">Col 1</div>
<div class="t" style="left:1352px;top:1033px;font-size:11.5px;line-height:11.5px;color:#c0c0c0;">Sel 0</div>
<div class="t" style="left:1406px;top:1033px;font-size:11.5px;line-height:11.5px;color:#c0c0c0;">INS</div>
<div style="left:1437px;top:164px;width:17px;height:68px;background:#3c3c3c;border-radius:3px 0 0 3px;border-left:1px solid #454545;border-top:1px solid #2c2c2c;border-bottom:1px solid #2c2c2c;box-sizing:border-box"></div>
<div class="t" style="left:1386px;top:192.0px;width:120px;height:12px;line-height:12px;text-align:center;font-size:11px;color:#a8a8a8;transform:rotate(-90deg)">UV Editor</div>
<div style="left:1437px;top:235px;width:17px;height:99px;background:#3c3c3c;border-radius:3px 0 0 3px;border-left:1px solid #454545;border-top:1px solid #2c2c2c;border-bottom:1px solid #2c2c2c;box-sizing:border-box"></div>
<div class="t" style="left:1386px;top:278.5px;width:120px;height:12px;line-height:12px;text-align:center;font-size:11px;color:#a8a8a8;transform:rotate(-90deg)">Attribute Editor</div>
<div style="left:1437px;top:337px;width:17px;height:100px;background:#3c3c3c;border-radius:3px 0 0 3px;border-left:1px solid #454545;border-top:1px solid #2c2c2c;border-bottom:1px solid #2c2c2c;box-sizing:border-box"></div>
<div class="t" style="left:1386px;top:381.0px;width:120px;height:12px;line-height:12px;text-align:center;font-size:11px;color:#a8a8a8;transform:rotate(-90deg)">Modeling Toolkit</div>
<div style="left:1437px;top:440px;width:17px;height:165px;background:#3c3c3c;border-radius:3px 0 0 3px;border-left:1px solid #454545;border-top:1px solid #2c2c2c;border-bottom:1px solid #2c2c2c;box-sizing:border-box"></div>
<div class="t" style="left:1386px;top:516.5px;width:120px;height:12px;line-height:12px;text-align:center;font-size:11px;color:#a8a8a8;transform:rotate(-90deg)">Channel Box / Layer Editor</div>
<div style="left:1470px;top:192px;width:435px;height:48px;background:#2b2b2b;"></div>
<div class="t" style="left:1470px;top:209px;font-size:20px;line-height:20px;color:#e8791f;font-weight:bold;letter-spacing:3px;width:435px;text-align:center">SV PUBLISHER</div>
<div style="left:1470px;top:242px;width:435px;height:19px;background:#2b2b2b;"></div>
<div class="t" style="left:1470px;top:244px;font-size:11.5px;line-height:11.5px;color:#a8a8a8;width:435px;text-align:center">Rig to Unity  |  MegaSurvivor Pipeline</div>
<div style="left:1470px;top:262px;width:435px;height:4px;background:#e8791f;"></div>
<div style="left:1471px;top:289px;width:433px;height:76px;background:#373737;border-radius:4px"></div>
<div class="t" style="left:1489px;top:277px;font-size:11.5px;line-height:11.5px;color:#e8791f;font-weight:bold">Scene Info</div>
<div style="left:1510px;top:312px;width:34px;height:15px;background:#303030;"></div>
<div style="left:1548px;top:312px;width:62px;height:15px;background:#303030;"></div>
<div style="left:1490px;top:331px;width:54px;height:15px;background:#303030;"></div>
<div style="left:1548px;top:331px;width:42px;height:15px;background:#303030;"></div>
<div class="t" style="left:1444px;top:314px;font-size:12px;line-height:12px;color:#e8e8e8;width:100px;text-align:right">Scene:</div>
<div class="t" style="left:1548px;top:314px;font-size:12px;line-height:12px;color:#f0f0f0;">Zombie.mb</div>
<div class="t" style="left:1444px;top:333px;font-size:12px;line-height:12px;color:#e8e8e8;width:100px;text-align:right">Character:</div>
<div class="t" style="left:1548px;top:333px;font-size:12px;line-height:12px;color:#e8791f;font-weight:bold">Zombie</div>
<div style="left:1471px;top:389px;width:433px;height:68px;background:#373737;border-radius:4px"></div>
<div class="t" style="left:1489px;top:377px;font-size:11.5px;line-height:11.5px;color:#e8791f;font-weight:bold">Export Path</div>
<div style="left:1490px;top:412px;width:308px;height:25px;background:#1b1b1b;border:1px solid #4a4a4a;border-radius:3px;box-sizing:border-box"></div>
<div class="t" style="left:1501px;top:421px;font-size:11px;line-height:11px;color:#8a8a8a;font-family:'Liberation Mono',monospace;letter-spacing:-0.4px">(default: scene_folder/Published)</div>
<div style="left:1805px;top:413px;width:79px;height:23px;background:#1e1e1e;border:1px solid #3a3a3a;border-radius:3px;box-sizing:border-box"></div>
<div class="t" style="left:1805px;top:419px;font-size:12px;line-height:12px;color:#f0f0f0;width:79px;text-align:center">Browse...</div>
<div style="left:1471px;top:481px;width:433px;height:148px;background:#373737;border-radius:4px"></div>
<div class="t" style="left:1489px;top:469px;font-size:11.5px;line-height:11.5px;color:#e8791f;font-weight:bold">Options</div>
<div style="left:1490px;top:504px;width:395px;height:22px;background:#2f2f2f;border-radius:2px"></div>
<div style="left:1490px;top:504px;width:22px;height:22px;background:#6abf4b;border-radius:3px"></div>
<div class="t" style="left:1520px;top:510px;font-size:12px;line-height:12px;color:#f0f0f0;">Clean ghost plugins before publish</div>
<div style="left:1490px;top:532px;width:395px;height:22px;background:#2f2f2f;border-radius:2px"></div>
<div style="left:1490px;top:532px;width:22px;height:22px;background:#6abf4b;border-radius:3px"></div>
<div class="t" style="left:1520px;top:538px;font-size:12px;line-height:12px;color:#f0f0f0;">Generate PropSync bones (weapon attach)</div>
<div style="left:1490px;top:560px;width:395px;height:22px;background:#2f2f2f;border-radius:2px"></div>
<div style="left:1490px;top:560px;width:22px;height:22px;background:#6abf4b;border-radius:3px"></div>
<div class="t" style="left:1520px;top:566px;font-size:12px;line-height:12px;color:#f0f0f0;">Setup IK Special Follow (Head/Hips/Root)</div>
<div style="left:1490px;top:588px;width:395px;height:22px;background:#2f2f2f;border-radius:2px"></div>
<div style="left:1490px;top:588px;width:22px;height:22px;background:#6abf4b;border-radius:3px"></div>
<div class="t" style="left:1520px;top:594px;font-size:12px;line-height:12px;color:#f0f0f0;">Apply scale limits to exported joints</div>
<div style="left:1471px;top:653px;width:433px;height:82px;background:#373737;border-radius:4px"></div>
<div class="t" style="left:1489px;top:641px;font-size:11.5px;line-height:11.5px;color:#e8791f;font-weight:bold">Progress</div>
<div style="left:1490px;top:676px;width:395px;height:13px;background:#2f2f2f;"></div>
<div class="t" style="left:1490px;top:678px;font-size:11px;line-height:11px;color:#909090;">Idle</div>
<div style="left:1490px;top:693px;width:394px;height:23px;background:#1b1b1b;border:1px solid #555;border-radius:3px;box-sizing:border-box"></div>
<div class="t" style="left:1490px;top:700px;font-size:12px;line-height:12px;color:#f0f0f0;width:394px;text-align:center;font-weight:bold">0 / 16</div>
<div style="left:1471px;top:760px;width:433px;height:153px;background:#373737;border-radius:4px"></div>
<div class="t" style="left:1489px;top:748px;font-size:11.5px;line-height:11.5px;color:#e8791f;font-weight:bold">Log</div>
<div style="left:1490px;top:783px;width:395px;height:130px;background:#1c1c1c;border:1px solid #3a3a3a;border-bottom:none;border-radius:2px 2px 0 0;box-sizing:border-box"></div>
<div style="left:1470px;top:922px;width:215px;height:36px;background:#5b9b3a;border-radius:3px"></div>
<div class="t" style="left:1470px;top:935px;font-size:12.5px;line-height:12.5px;color:#ffffff;width:215px;text-align:center;font-weight:bold">TEST BUILD</div>
<div style="left:1691px;top:922px;width:214px;height:36px;background:#c0392b;border-radius:3px"></div>
<div class="t" style="left:1691px;top:935px;font-size:12.5px;line-height:12.5px;color:#ffffff;width:214px;text-align:center;font-weight:bold">DEBUG MODE</div>
<div style="left:1470px;top:964px;width:435px;height:51px;background:#e07020;border-radius:4px"></div>
<div class="t" style="left:1470px;top:985px;font-size:16px;line-height:16px;color:#ffffff;width:435px;text-align:center;font-weight:bold;letter-spacing:2px">PUBLISH TO UNITY</div>
<div style="left:1470px;top:1024px;width:84px;height:14px;background:#333;"></div>
<div class="t" style="left:1470px;top:1026px;font-size:10.5px;line-height:10.5px;color:#a8a8a8;">TD Agustin Lozano</div>
<div style="left:1847px;top:1024px;width:58px;height:14px;background:#333;"></div>
<div class="t" style="left:1805px;top:1026px;font-size:10.5px;line-height:10.5px;color:#a8a8a8;width:100px;text-align:right">v07  |  PySide</div>
</body></html>
